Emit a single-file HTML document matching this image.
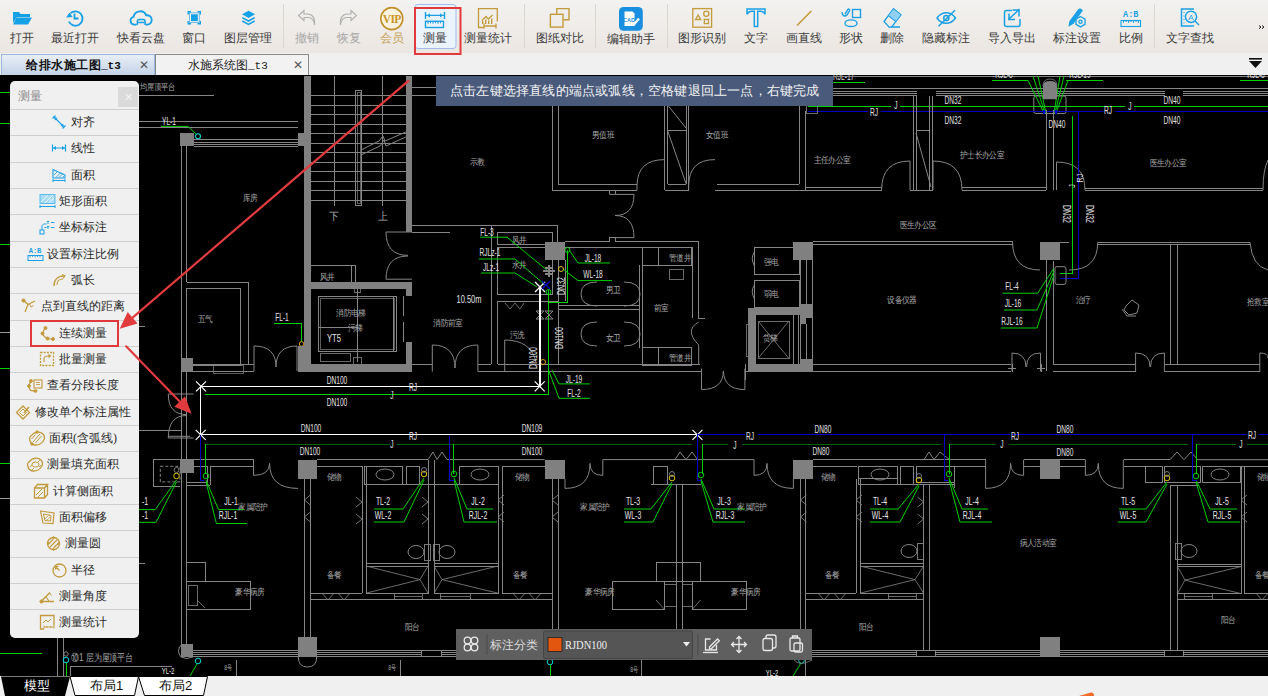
<!DOCTYPE html>
<html><head><meta charset="utf-8">
<style>
*{margin:0;padding:0;box-sizing:border-box}
html,body{width:1268px;height:696px;overflow:hidden;background:#000;font-family:"Liberation Serif",serif}
#cad{position:absolute;left:0;top:0}
#tb{position:absolute;left:0;top:0;width:1268px;height:53px;background:linear-gradient(#f3f2f0,#ebe6e2)}
.lb{position:absolute;top:31px;font-size:12px;line-height:14px;color:#3a3a3a;white-space:nowrap;transform:translateX(-50%)}
.lb.dis{color:#a8a8a8}
.lb.gold{color:#c8a45a}
.sep{position:absolute;top:4px;width:1px;height:44px;background:#dcd6d0}
#tabs{position:absolute;left:0;top:53px;width:1268px;height:22px;background:#f0f0f0}
.tab{position:absolute;top:1px;height:21px;font-size:12px;line-height:20px;white-space:nowrap}
#btabs{position:absolute;left:0;top:676px;width:1268px;height:20px;background:#f0f0f0}
#panel{position:absolute;left:10px;top:81px;width:129px;height:557px;background:#f0f0f0;border-radius:5px;overflow:hidden}
.pi{position:absolute;left:0;width:129px;height:26.4px;padding-right:3px;border-top:1px solid #cfcfcf;font-size:12px;line-height:25px;color:#2a2a2a;white-space:nowrap;text-align:center}
.pi svg{vertical-align:middle;margin-right:3px;position:relative;top:-1px}
#tip{position:absolute;left:436px;top:76px;width:397px;height:29.5px;background:#4a5a7b;color:#f4f4f4;font-size:13px;line-height:29px;padding-left:14px;white-space:nowrap;letter-spacing:0.2px}
#bbar{position:absolute;left:456px;top:629px;width:356px;height:31px;background:#5f5f5f}
</style></head><body>
<svg id="cad" width="1268" height="696" viewBox="0 0 1268 696" shape-rendering="auto"><path d="M139 95.6L213.5 95.6" stroke="#858585" stroke-width="1" shape-rendering="crispEdges"/>
<text transform="translate(140 90) scale(0.8 1)" font-family="Liberation Sans" font-size="9" fill="#a8a8a8" text-anchor="start">均屋顶平台</text>
<path d="M139 121.4L298 121.4" stroke="#858585" stroke-width="1" shape-rendering="crispEdges"/>
<path d="M139 127.5L298 127.5" stroke="#858585" stroke-width="1" shape-rendering="crispEdges"/>
<text transform="translate(169 124.5) scale(0.6 1)" font-family="Liberation Sans" font-size="11.0" fill="#e2e2e2" text-anchor="middle">YL-1</text>
<path d="M161 126.4H188L196 134" stroke="#00d000" stroke-width="1" fill="none"/>
<circle cx="198" cy="136.3" r="2.5" stroke="#00d8d8" stroke-width="1.1" fill="none"/>
<path d="M193.7 139.3L298 139.3" stroke="#858585" stroke-width="1" shape-rendering="crispEdges"/>
<path d="M193.7 142.4L298 142.4" stroke="#858585" stroke-width="1" shape-rendering="crispEdges"/>
<path d="M193.7 144.3L298 144.3" stroke="#858585" stroke-width="1" shape-rendering="crispEdges"/>
<path d="M193.7 146.4L298 146.4" stroke="#858585" stroke-width="1" shape-rendering="crispEdges"/>
<path d="M311 95.6L405.8 95.6" stroke="#858585" stroke-width="1" shape-rendering="crispEdges"/>
<path d="M311 105.2L405.8 105.2" stroke="#858585" stroke-width="1" shape-rendering="crispEdges"/>
<path d="M311 114.7L405.8 114.7" stroke="#858585" stroke-width="1" shape-rendering="crispEdges"/>
<path d="M311 124.3L405.8 124.3" stroke="#858585" stroke-width="1" shape-rendering="crispEdges"/>
<path d="M311 133.6L405.8 133.6" stroke="#858585" stroke-width="1" shape-rendering="crispEdges"/>
<path d="M311 143.2L405.8 143.2" stroke="#858585" stroke-width="1" shape-rendering="crispEdges"/>
<path d="M311 152.8L405.8 152.8" stroke="#858585" stroke-width="1" shape-rendering="crispEdges"/>
<path d="M311 162.1L405.8 162.1" stroke="#858585" stroke-width="1" shape-rendering="crispEdges"/>
<path d="M311 171.5L405.8 171.5" stroke="#858585" stroke-width="1" shape-rendering="crispEdges"/>
<path d="M311 181L405.8 181" stroke="#858585" stroke-width="1" shape-rendering="crispEdges"/>
<path d="M311 190.4L405.8 190.4" stroke="#858585" stroke-width="1" shape-rendering="crispEdges"/>
<path d="M311 200L405.8 200" stroke="#858585" stroke-width="1" shape-rendering="crispEdges"/>
<path d="M334 76L334 206" stroke="#858585" stroke-width="1" shape-rendering="crispEdges"/>
<path d="M382.4 76L382.4 206" stroke="#858585" stroke-width="1" shape-rendering="crispEdges"/>
<rect x="355.4" y="90" width="6.300000000000011" height="115" stroke="#858585" stroke-width="1" fill="none" shape-rendering="crispEdges"/>
<rect x="357" y="92" width="3" height="111" stroke="#858585" stroke-width="0.7" fill="none" shape-rendering="crispEdges"/>
<path d="M361 155L380 146L384 140L386 146L405.8 137M361 150L379 141L383 136L385 141L405.8 132" stroke="#858585" stroke-width="1" fill="none"/>
<path d="M382.4 126L382.4 134" stroke="#858585" stroke-width="1" shape-rendering="crispEdges"/>
<path d="M382.4 158L382.4 166" stroke="#858585" stroke-width="1" shape-rendering="crispEdges"/>
<text transform="translate(334 220) scale(0.9 1)" font-family="Liberation Sans" font-size="11" fill="#a8a8a8" text-anchor="middle">下</text>
<text transform="translate(383 220) scale(0.9 1)" font-family="Liberation Sans" font-size="11" fill="#a8a8a8" text-anchor="middle">上</text>
<text transform="translate(250 201) scale(0.85 1)" font-family="Liberation Sans" font-size="9" fill="#a8a8a8" text-anchor="middle">库房</text>
<path d="M411.9 87.7L436 87.7" stroke="#858585" stroke-width="1" shape-rendering="crispEdges"/>
<path d="M411.9 95.2L436 95.2" stroke="#858585" stroke-width="1" shape-rendering="crispEdges"/>
<path d="M411.9 232L450 232" stroke="#858585" stroke-width="1" shape-rendering="crispEdges"/>
<path d="M181 146L181 358" stroke="#858585" stroke-width="1" shape-rendering="crispEdges"/>
<path d="M186.6 146L186.6 282" stroke="#858585" stroke-width="1" shape-rendering="crispEdges"/>
<path d="M186.6 282H248V365" stroke="#858585" stroke-width="1" fill="none" shape-rendering="crispEdges"/>
<rect x="186.8" y="288" width="53.69999999999999" height="77" stroke="#858585" stroke-width="1" fill="none" shape-rendering="crispEdges"/>
<text transform="translate(205 322) scale(0.85 1)" font-family="Liberation Sans" font-size="9" fill="#a8a8a8" text-anchor="middle">五气</text>
<path d="M193 364.4L254 364.4" stroke="#858585" stroke-width="1" shape-rendering="crispEdges"/>
<path d="M193 371L254 371" stroke="#858585" stroke-width="1" shape-rendering="crispEdges"/>
<path d="M254 346V371M254 346Q276 346 276 367M297 346Q276 346 276 367M297 346V371" stroke="#858585" stroke-width="1" fill="none"/>
<rect x="213" y="365" width="30" height="8" stroke="#858585" stroke-width="0.7" fill="none" shape-rendering="crispEdges"/>
<text transform="translate(282 321) scale(0.6 1)" font-family="Liberation Sans" font-size="11.0" fill="#e2e2e2" text-anchor="middle">FL-1</text>
<path d="M274 323H301.6V342" stroke="#00d000" stroke-width="1" fill="none" shape-rendering="crispEdges"/>
<circle cx="301.6" cy="344" r="2.3" stroke="#e0a000" stroke-width="1" fill="none"/>
<path d="M311 265.4H355.4V281.8M351.6 265.4V281.8" stroke="#858585" stroke-width="1" fill="none" shape-rendering="crispEdges"/>
<text transform="translate(327 280) scale(0.85 1)" font-family="Liberation Sans" font-size="9" fill="#a8a8a8" text-anchor="middle">风井</text>
<rect x="318" y="296.2" width="78.19999999999999" height="55.0" stroke="#858585" stroke-width="1" fill="none" shape-rendering="crispEdges"/>
<rect x="320" y="298" width="74" height="51" stroke="#858585" stroke-width="0.7" fill="none" shape-rendering="crispEdges"/>
<path d="M318 327.3L357 327.3" stroke="#858585" stroke-width="1" shape-rendering="crispEdges"/>
<path d="M357 282L357 362" stroke="#858585" stroke-width="1" shape-rendering="crispEdges"/>
<rect x="354" y="286" width="6" height="6" stroke="#858585" stroke-width="0.8" fill="none" shape-rendering="crispEdges"/>
<rect x="353" y="357" width="8" height="8" stroke="#858585" stroke-width="0.8" fill="none" shape-rendering="crispEdges"/>
<rect x="320" y="353" width="30" height="8" stroke="#858585" stroke-width="0.8" fill="none" shape-rendering="crispEdges"/>
<path d="M393.7 296L393.7 351" stroke="#858585" stroke-width="1" shape-rendering="crispEdges"/>
<path d="M403.8 296L403.8 316" stroke="#858585" stroke-width="1" shape-rendering="crispEdges"/>
<path d="M403.8 322L403.8 342" stroke="#858585" stroke-width="1" shape-rendering="crispEdges"/>
<text transform="translate(351 316) scale(0.85 1)" font-family="Liberation Sans" font-size="9" fill="#a8a8a8" text-anchor="middle">消防电梯</text>
<text transform="translate(355 331) scale(0.85 1)" font-family="Liberation Sans" font-size="9" fill="#a8a8a8" text-anchor="middle">污梯</text>
<text transform="translate(334 342) scale(0.7 1)" font-family="Liberation Sans" font-size="11" fill="#e2e2e2" text-anchor="middle">YT5</text>
<path d="M411.9 232H386Q386 255.4 408 255.4M411.9 279.2H386Q386 256 408 256" stroke="#858585" stroke-width="1" fill="none"/>
<path d="M411.9 225.2L450 225.2" stroke="#858585" stroke-width="1" shape-rendering="crispEdges"/>
<text transform="translate(448 326) scale(0.85 1)" font-family="Liberation Sans" font-size="9" fill="#a8a8a8" text-anchor="middle">消防前室</text>
<path d="M432.3 371.6V345Q455 345 455 368M477.9 371.6V345Q455 345 455 368" stroke="#858585" stroke-width="1" fill="none"/>
<path d="M411.9 364.3L432.3 364.3" stroke="#858585" stroke-width="1" shape-rendering="crispEdges"/>
<path d="M193.6 394H168.3Q168.3 414.6 186.7 414.6M193.6 438H168.3Q168.3 415.5 186.7 415.5M168.3 436.3H190" stroke="#858585" stroke-width="1" fill="none"/>
<path d="M139 326L145 326" stroke="#858585" stroke-width="1" shape-rendering="crispEdges"/>
<path d="M139 563L145 563" stroke="#858585" stroke-width="1" shape-rendering="crispEdges"/>
<path d="M139 430.2L181 430.2" stroke="#858585" stroke-width="1" shape-rendering="crispEdges"/>
<path d="M181 371.5L181 459.9" stroke="#858585" stroke-width="1" shape-rendering="crispEdges"/>
<path d="M186.6 371.5L186.6 459.9" stroke="#858585" stroke-width="1" shape-rendering="crispEdges"/>
<path d="M440 225.5H557.9V241.5" stroke="#858585" stroke-width="1" fill="none" shape-rendering="crispEdges"/>
<path d="M491.4 225.5L491.4 364.3" stroke="#858585" stroke-width="1" shape-rendering="crispEdges"/>
<rect x="497.5" y="232.6" width="54.5" height="11.800000000000011" stroke="#858585" stroke-width="1" fill="none" shape-rendering="crispEdges"/>
<rect x="497.5" y="247.7" width="54.5" height="46.80000000000001" stroke="#858585" stroke-width="1" fill="none" shape-rendering="crispEdges"/>
<path d="M496.8 301.3L558 301.3" stroke="#858585" stroke-width="1" shape-rendering="crispEdges"/>
<text transform="translate(519 243) scale(0.85 1)" font-family="Liberation Sans" font-size="9" fill="#a8a8a8" text-anchor="middle">风井</text>
<text transform="translate(519 268) scale(0.85 1)" font-family="Liberation Sans" font-size="9" fill="#a8a8a8" text-anchor="middle">水井</text>
<text transform="translate(469 303) scale(0.75 1)" font-family="Liberation Sans" font-size="10" fill="#e2e2e2" text-anchor="middle">10.50m</text>
<path d="M477.9 364.3L491.4 364.3" stroke="#858585" stroke-width="1" shape-rendering="crispEdges"/>
<path d="M497.6 364.3L700 364.3" stroke="#858585" stroke-width="1" shape-rendering="crispEdges"/>
<path d="M477.9 371.6L700 371.6" stroke="#858585" stroke-width="1" shape-rendering="crispEdges"/>
<path d="M497.5 301.3L497.5 364.4" stroke="#858585" stroke-width="1" shape-rendering="crispEdges"/>
<path d="M504.7 371.6V340Q531 340 536 362" stroke="#858585" stroke-width="1" fill="none"/>
<path d="M505 303L510 309L515 303L520 309L524 303" stroke="#858585" stroke-width="0.8" fill="none"/>
<text transform="translate(517 338) scale(0.85 1)" font-family="Liberation Sans" font-size="9" fill="#a8a8a8" text-anchor="middle">污洗</text>
<path d="M565 241.5H609.5V237.6H615.5V241.5H698.7V318.5H705M565 247.8H692V318" stroke="#858585" stroke-width="1" fill="none" shape-rendering="crispEdges"/>
<rect x="642" y="247.8" width="49" height="17.599999999999966" stroke="#858585" stroke-width="1" fill="none" shape-rendering="crispEdges"/>
<path d="M658.4 247.8L658.4 265.4" stroke="#858585" stroke-width="1" shape-rendering="crispEdges"/>
<rect x="642" y="347.5" width="49" height="17.69999999999999" stroke="#858585" stroke-width="1" fill="none" shape-rendering="crispEdges"/>
<path d="M658.4 347.5L658.4 365.2" stroke="#858585" stroke-width="1" shape-rendering="crispEdges"/>
<path d="M639.5 265.4L639.5 347.5" stroke="#858585" stroke-width="1" shape-rendering="crispEdges"/>
<path d="M642 265.4L642 347.5" stroke="#858585" stroke-width="1" shape-rendering="crispEdges"/>
<text transform="translate(680 261) scale(0.85 1)" font-family="Liberation Sans" font-size="9" fill="#a8a8a8" text-anchor="middle">管道井</text>
<text transform="translate(680 361) scale(0.85 1)" font-family="Liberation Sans" font-size="9" fill="#a8a8a8" text-anchor="middle">管道井</text>
<rect x="669" y="269" width="14" height="10" stroke="#858585" stroke-width="0.8" fill="none" shape-rendering="crispEdges"/>
<text transform="translate(661 311) scale(0.85 1)" font-family="Liberation Sans" font-size="9" fill="#a8a8a8" text-anchor="middle">前室</text>
<text transform="translate(613 293) scale(0.85 1)" font-family="Liberation Sans" font-size="9" fill="#a8a8a8" text-anchor="middle">男卫</text>
<text transform="translate(613 341) scale(0.85 1)" font-family="Liberation Sans" font-size="9" fill="#a8a8a8" text-anchor="middle">女卫</text>
<path d="M558 305.8L639.5 305.8" stroke="#858585" stroke-width="1" shape-rendering="crispEdges"/>
<path d="M558 309.6L639.5 309.6" stroke="#858585" stroke-width="1" shape-rendering="crispEdges"/>
<path d="M558 260.4L558 365" stroke="#858585" stroke-width="1" shape-rendering="crispEdges"/>
<path d="M565 260.4L565 301.3" stroke="#858585" stroke-width="1" shape-rendering="crispEdges"/>
<path d="M597 282Q581 282 581 294Q581 306 597 306" stroke="#858585" stroke-width="1" fill="none"/>
<path d="M597 322Q581 322 581 334Q581 346 597 346" stroke="#858585" stroke-width="1" fill="none"/>
<path d="M624 282Q640 282 640 294Q640 306 624 306" stroke="#858585" stroke-width="1" fill="none"/>
<path d="M624 322Q640 322 640 334Q640 346 624 346" stroke="#858585" stroke-width="1" fill="none"/>
<path d="M698.7 322Q684 330 698.7 345V365" stroke="#858585" stroke-width="1" fill="none"/>
<text transform="translate(487 236) scale(0.6 1)" font-family="Liberation Sans" font-size="11.0" fill="#e2e2e2" text-anchor="middle">FL-3</text>
<path d="M480 237.2H507L548 271" stroke="#00d000" stroke-width="1" fill="none"/>
<text transform="translate(490 256) scale(0.6 1)" font-family="Liberation Sans" font-size="11.0" fill="#e2e2e2" text-anchor="middle">RJLz-1</text>
<path d="M479 259H515L545 285" stroke="#00d000" stroke-width="1" fill="none"/>
<text transform="translate(491 271) scale(0.6 1)" font-family="Liberation Sans" font-size="11.0" fill="#e2e2e2" text-anchor="middle">JLz-1</text>
<path d="M481 273H515L537 287" stroke="#00d000" stroke-width="1" fill="none"/>
<path d="M543 271H555M549 265V277M545 268H553M545 274H553" stroke="#858585" stroke-width="1.2" fill="none" shape-rendering="crispEdges"/>
<path d="M535 282L545 292M535 292L545 282" stroke="#fff" stroke-width="1.3" fill="none"/>
<path d="M542 281L550 289M542 289L550 281" stroke="#0000c8" stroke-width="1.3" fill="none"/>
<text transform="translate(593 262) scale(0.6 1)" font-family="Liberation Sans" font-size="11.0" fill="#e2e2e2" text-anchor="middle">JL-18</text>
<path d="M569 250L578 263H610" stroke="#00d000" stroke-width="1" fill="none"/>
<text transform="translate(593 278) scale(0.6 1)" font-family="Liberation Sans" font-size="11.0" fill="#e2e2e2" text-anchor="middle">WL-18</text>
<path d="M563 269L578 280.6H612" stroke="#00d000" stroke-width="1" fill="none"/>
<path d="M567.5 250V302.8H548.5M548.5 290V394.5H205" stroke="#00d000" stroke-width="1" fill="none" shape-rendering="crispEdges"/>
<circle cx="567.5" cy="250" r="2.5" stroke="#00d000" stroke-width="1" fill="none"/>
<circle cx="548.5" cy="292" r="2.5" stroke="#00d000" stroke-width="1" fill="none"/>
<circle cx="561" cy="269" r="2.5" stroke="#e0c000" stroke-width="1" fill="none"/>
<path d="M536 311L544 319M536 319L544 311M536 311H544M536 319H544M545 311L553 319M545 319L553 311M545 311H553M545 319H553" stroke="#858585" stroke-width="1" fill="none"/>
<text transform="translate(565 286) rotate(-90) scale(0.7 1)" font-family="Liberation Sans" font-size="10" fill="#e2e2e2" text-anchor="middle">DN32</text>
<text transform="translate(563 338) rotate(-90) scale(0.7 1)" font-family="Liberation Sans" font-size="10" fill="#e2e2e2" text-anchor="middle">DN100</text>
<text transform="translate(537 358) rotate(-90) scale(0.7 1)" font-family="Liberation Sans" font-size="10" fill="#e2e2e2" text-anchor="middle">DN100</text>
<circle cx="543" cy="362" r="2.5" stroke="#e0a000" stroke-width="1" fill="none"/>
<path d="M552 106L552 190" stroke="#858585" stroke-width="1" shape-rendering="crispEdges"/>
<path d="M558 106L558 184.4" stroke="#858585" stroke-width="1" shape-rendering="crispEdges"/>
<path d="M552 190L637 190" stroke="#858585" stroke-width="1" shape-rendering="crispEdges"/>
<path d="M558 184.4L637 184.4" stroke="#858585" stroke-width="1" shape-rendering="crispEdges"/>
<path d="M637 190V186Q637 159.6 664.6 159.6" stroke="#858585" stroke-width="1" fill="none"/>
<path d="M664.6 96L664.6 190" stroke="#858585" stroke-width="1" shape-rendering="crispEdges"/>
<path d="M667.6 96L667.6 184.4" stroke="#858585" stroke-width="1" shape-rendering="crispEdges"/>
<path d="M686 96L686 184.4" stroke="#858585" stroke-width="1" shape-rendering="crispEdges"/>
<path d="M688.7 96L688.7 190" stroke="#858585" stroke-width="1" shape-rendering="crispEdges"/>
<path d="M667.6 130.6L686 130.6" stroke="#858585" stroke-width="1" shape-rendering="crispEdges"/>
<path d="M667.6 105L686 128" stroke="#858585" stroke-width="1"/>
<path d="M667.6 130.6L686 183.6" stroke="#858585" stroke-width="1"/>
<path d="M667.6 184.4L686 184.4" stroke="#858585" stroke-width="1" shape-rendering="crispEdges"/>
<path d="M664.6 190L688.7 190" stroke="#858585" stroke-width="1" shape-rendering="crispEdges"/>
<path d="M688.7 190V186Q688.7 159.6 715 159.6" stroke="#858585" stroke-width="1" fill="none"/>
<path d="M717 184.4L760 184.4" stroke="#858585" stroke-width="1" shape-rendering="crispEdges"/>
<path d="M715 190L760 190" stroke="#858585" stroke-width="1" shape-rendering="crispEdges"/>
<text transform="translate(477 165) scale(0.85 1)" font-family="Liberation Sans" font-size="9" fill="#a8a8a8" text-anchor="middle">示教</text>
<text transform="translate(603 138) scale(0.85 1)" font-family="Liberation Sans" font-size="9" fill="#a8a8a8" text-anchor="middle">男值班</text>
<text transform="translate(717 138) scale(0.85 1)" font-family="Liberation Sans" font-size="9" fill="#a8a8a8" text-anchor="middle">女值班</text>
<path d="M609.5 190V194.4H615.5V190M615.5 194.4H634Q634 215.5 615 215.5Q634 215.5 634 237.6H615.5" stroke="#858585" stroke-width="1" fill="none"/>
<text transform="translate(440 0) scale(0.6 1)" font-family="Liberation Sans" font-size="1.1" fill="#e2e2e2" text-anchor="middle"></text>
<path d="M833 88.5L1042.5 88.5" stroke="#858585" stroke-width="1" shape-rendering="crispEdges"/>
<path d="M1054 88.5L1268 88.5" stroke="#858585" stroke-width="1" shape-rendering="crispEdges"/>
<path d="M833 91.5L1042.5 91.5" stroke="#858585" stroke-width="1" shape-rendering="crispEdges"/>
<path d="M1054 91.5L1268 91.5" stroke="#858585" stroke-width="1" shape-rendering="crispEdges"/>
<path d="M833 93.5L1042.5 93.5" stroke="#858585" stroke-width="1" shape-rendering="crispEdges"/>
<path d="M1054 93.5L1268 93.5" stroke="#858585" stroke-width="1" shape-rendering="crispEdges"/>
<path d="M833 95.6L1042.5 95.6" stroke="#858585" stroke-width="1" shape-rendering="crispEdges"/>
<path d="M1054 95.6L1268 95.6" stroke="#858585" stroke-width="1" shape-rendering="crispEdges"/>
<rect x="916.6" y="88" width="18.899999999999977" height="9" fill="#000" shape-rendering="crispEdges"/>
<path d="M916.6 88L935.5 88" stroke="#858585" stroke-width="1" shape-rendering="crispEdges"/>
<rect x="1165" y="88" width="18" height="9" fill="#000" shape-rendering="crispEdges"/>
<path d="M1165 88L1183 88" stroke="#858585" stroke-width="1" shape-rendering="crispEdges"/>
<path d="M1043 86Q1043 79 1050 79Q1057 79 1057 86" stroke="#858585" stroke-width="0.8" fill="none"/>
<rect x="1033.8" y="96" width="32.2" height="17.5" rx="2" stroke="#858585" fill="none"/>
<path d="M1047.5 99.2L1053.5 99.2" stroke="#000" stroke-width="1" shape-rendering="crispEdges"/>
<path d="M833 82.4L865 82.4" stroke="#00d000" stroke-width="1" shape-rendering="crispEdges"/>
<text transform="translate(833 80) scale(0.6 1)" font-family="Liberation Sans" font-size="11.0" fill="#e2e2e2" text-anchor="start">RJL-17</text>
<path d="M833 76.3L1268 76.3" stroke="#858585" stroke-width="1" shape-rendering="crispEdges"/>
<path d="M992 80.6L1027.6 80.6" stroke="#00d000" stroke-width="1" shape-rendering="crispEdges"/>
<path d="M1065.5 80.3L1103.4 80.3" stroke="#00d000" stroke-width="1" shape-rendering="crispEdges"/>
<path d="M1240 80L1268 80" stroke="#00d000" stroke-width="1" shape-rendering="crispEdges"/>
<text transform="translate(1004 78) scale(0.6 1)" font-family="Liberation Sans" font-size="11.0" fill="#e2e2e2" text-anchor="middle">RJL-8</text>
<text transform="translate(1080 78) scale(0.6 1)" font-family="Liberation Sans" font-size="11.0" fill="#e2e2e2" text-anchor="middle">RJL-19</text>
<text transform="translate(1256 78) scale(0.6 1)" font-family="Liberation Sans" font-size="11.0" fill="#e2e2e2" text-anchor="middle">RJL-8</text>
<path d="M1028 80.5L1044 113M1033 76L1045 113M1038 76L1046 113M1068 80.5L1056 113M1064 76L1055 113M1060 76L1054 113" stroke="#00d000" stroke-width="1" fill="none"/>
<path d="M1044 110L1044 114" stroke="#0000c8" stroke-width="1.5" shape-rendering="crispEdges"/>
<path d="M1056 110L1056 114" stroke="#0000c8" stroke-width="1.5" shape-rendering="crispEdges"/>
<path d="M808 106.3H891M900 106.3H1125M1134 106.3H1268" stroke="#00d000" stroke-width="1" fill="none" shape-rendering="crispEdges"/>
<path d="M808 111.8H868M881 111.8H1103M1115 111.8H1268" stroke="#0000c8" stroke-width="1" fill="none" shape-rendering="crispEdges"/>
<text transform="translate(896 109) scale(0.6 1)" font-family="Liberation Sans" font-size="11.0" fill="#e2e2e2" text-anchor="middle">J</text>
<text transform="translate(874 116) scale(0.6 1)" font-family="Liberation Sans" font-size="11.0" fill="#e2e2e2" text-anchor="middle">RJ</text>
<text transform="translate(1130 110) scale(0.6 1)" font-family="Liberation Sans" font-size="11.0" fill="#e2e2e2" text-anchor="middle">J</text>
<text transform="translate(1108 114) scale(0.6 1)" font-family="Liberation Sans" font-size="11.0" fill="#e2e2e2" text-anchor="middle">RJ</text>
<rect x="806" y="103" width="11" height="10" stroke="#858585" stroke-width="0.8" fill="none" shape-rendering="crispEdges"/>
<text transform="translate(953 104) scale(0.6 1)" font-family="Liberation Sans" font-size="11.0" fill="#e2e2e2" text-anchor="middle">DN32</text>
<text transform="translate(953 124) scale(0.6 1)" font-family="Liberation Sans" font-size="11.0" fill="#e2e2e2" text-anchor="middle">DN32</text>
<text transform="translate(1057 128) scale(0.6 1)" font-family="Liberation Sans" font-size="11.0" fill="#e2e2e2" text-anchor="middle">DN40</text>
<text transform="translate(1172 104) scale(0.6 1)" font-family="Liberation Sans" font-size="11.0" fill="#e2e2e2" text-anchor="middle">DN40</text>
<text transform="translate(1172 124) scale(0.6 1)" font-family="Liberation Sans" font-size="11.0" fill="#e2e2e2" text-anchor="middle">DN40</text>
<path d="M805.5 111L805.5 190" stroke="#858585" stroke-width="1" shape-rendering="crispEdges"/>
<path d="M799 106L799 184.3" stroke="#858585" stroke-width="1" shape-rendering="crispEdges"/>
<path d="M750 184.3L799 184.3" stroke="#858585" stroke-width="1" shape-rendering="crispEdges"/>
<path d="M717 190L805.5 190" stroke="#858585" stroke-width="1" shape-rendering="crispEdges"/>
<path d="M805.5 187.5L881.6 187.5" stroke="#858585" stroke-width="1" shape-rendering="crispEdges"/>
<path d="M805.5 190L881.6 190" stroke="#858585" stroke-width="1" shape-rendering="crispEdges"/>
<path d="M881.6 190Q881.6 161 910 161V190" stroke="#858585" stroke-width="1" fill="none"/>
<path d="M913.5 96L913.5 190" stroke="#858585" stroke-width="1" shape-rendering="crispEdges"/>
<path d="M916 96L916 190" stroke="#858585" stroke-width="1" shape-rendering="crispEdges"/>
<path d="M929.5 96L929.5 190" stroke="#858585" stroke-width="1" shape-rendering="crispEdges"/>
<path d="M932 96L932 190" stroke="#858585" stroke-width="1" shape-rendering="crispEdges"/>
<path d="M916 130.6L929.5 130.6" stroke="#858585" stroke-width="1" shape-rendering="crispEdges"/>
<path d="M916 133L931 187" stroke="#858585" stroke-width="1"/>
<path d="M910 190L933 190" stroke="#858585" stroke-width="1" shape-rendering="crispEdges"/>
<path d="M933 190V161Q962 161 962 190" stroke="#858585" stroke-width="1" fill="none"/>
<path d="M962 187.5L1046 187.5" stroke="#858585" stroke-width="1" shape-rendering="crispEdges"/>
<path d="M962 190L1046 190" stroke="#858585" stroke-width="1" shape-rendering="crispEdges"/>
<path d="M1046 110L1046 190" stroke="#858585" stroke-width="1" shape-rendering="crispEdges"/>
<path d="M1053 110L1053 190" stroke="#858585" stroke-width="1" shape-rendering="crispEdges"/>
<path d="M1056.5 190V162Q1085 162 1085 190" stroke="#858585" stroke-width="1" fill="none"/>
<path d="M1085 188.4L1263 188.4" stroke="#858585" stroke-width="1" shape-rendering="crispEdges"/>
<path d="M1085 190.5L1263 190.5" stroke="#858585" stroke-width="1" shape-rendering="crispEdges"/>
<path d="M1268 160Q1263 170 1263 190" stroke="#858585" stroke-width="1" fill="none"/>
<path d="M1072.4 116V273.3H1060" stroke="#00d000" stroke-width="1" fill="none" shape-rendering="crispEdges"/>
<path d="M1078.6 111.8V278.6H1060" stroke="#0000c8" stroke-width="1" fill="none" shape-rendering="crispEdges"/>
<text transform="translate(1075 186) rotate(-90) scale(0.8 1)" font-family="Liberation Sans" font-size="9" fill="#e2e2e2" text-anchor="middle">J</text>
<text transform="translate(1083 178) rotate(-90) scale(0.8 1)" font-family="Liberation Sans" font-size="9" fill="#e2e2e2" text-anchor="middle">RJ</text>
<text transform="translate(1063 214) rotate(90) scale(0.7 1)" font-family="Liberation Sans" font-size="10" fill="#e2e2e2" text-anchor="middle">DN32</text>
<text transform="translate(1086 214) rotate(90) scale(0.7 1)" font-family="Liberation Sans" font-size="10" fill="#e2e2e2" text-anchor="middle">DN32</text>
<text transform="translate(832 163) scale(0.85 1)" font-family="Liberation Sans" font-size="9" fill="#a8a8a8" text-anchor="middle">主任办公室</text>
<text transform="translate(982 158) scale(0.85 1)" font-family="Liberation Sans" font-size="9" fill="#a8a8a8" text-anchor="middle">护士长办公室</text>
<text transform="translate(918 228) scale(0.85 1)" font-family="Liberation Sans" font-size="9" fill="#a8a8a8" text-anchor="middle">医生办公区</text>
<text transform="translate(1168 166) scale(0.85 1)" font-family="Liberation Sans" font-size="9" fill="#a8a8a8" text-anchor="middle">医生办公室</text>
<path d="M812.6 241.5L1012.5 241.5" stroke="#858585" stroke-width="1" shape-rendering="crispEdges"/>
<path d="M812.6 244.5L1012.5 244.5" stroke="#858585" stroke-width="1" shape-rendering="crispEdges"/>
<path d="M1012.5 241.5Q1012.5 270 1040 270" stroke="#858585" stroke-width="1" fill="none"/>
<rect x="754.5" y="247.8" width="44.700000000000045" height="26.5" stroke="#858585" stroke-width="1" fill="none" shape-rendering="crispEdges"/>
<rect x="754.5" y="280.6" width="44.700000000000045" height="26.399999999999977" stroke="#858585" stroke-width="1" fill="none" shape-rendering="crispEdges"/>
<path d="M754.5 252Q750 258 754.5 266M754.5 285Q750 291 754.5 299" stroke="#858585" stroke-width="1" fill="none"/>
<text transform="translate(771 265) scale(0.85 1)" font-family="Liberation Sans" font-size="9" fill="#a8a8a8" text-anchor="middle">强电</text>
<text transform="translate(771 297) scale(0.85 1)" font-family="Liberation Sans" font-size="9" fill="#a8a8a8" text-anchor="middle">弱电</text>
<rect x="755.5" y="314.6" width="37.5" height="49.799999999999955" stroke="#858585" stroke-width="1" fill="none" shape-rendering="crispEdges"/>
<rect x="758" y="321" width="31" height="37.5" stroke="#858585" stroke-width="0.8" fill="none" shape-rendering="crispEdges"/>
<path d="M758 321L789 358.5" stroke="#858585" stroke-width="0.8"/>
<path d="M789 321L758 358.5" stroke="#858585" stroke-width="0.8"/>
<text transform="translate(770 341) scale(0.85 1)" font-family="Liberation Sans" font-size="9" fill="#a8a8a8" text-anchor="middle">货梯</text>
<path d="M798.8 314.6L798.8 364.4" stroke="#858585" stroke-width="1" shape-rendering="crispEdges"/>
<path d="M800 324.3L800 359.2" stroke="#858585" stroke-width="1" shape-rendering="crispEdges"/>
<path d="M806 324.3L806 359.2" stroke="#858585" stroke-width="1" shape-rendering="crispEdges"/>
<path d="M800 260.4L800 304.2" stroke="#858585" stroke-width="1" shape-rendering="crispEdges"/>
<path d="M806 260.4L806 304.2" stroke="#858585" stroke-width="1" shape-rendering="crispEdges"/>
<rect x="746" y="324" width="4" height="32" stroke="#858585" stroke-width="0.8" fill="none" shape-rendering="crispEdges"/>
<path d="M745 364L745 380" stroke="#858585" stroke-width="1" shape-rendering="crispEdges"/>
<path d="M812.6 364.4L1011 364.4" stroke="#858585" stroke-width="1" shape-rendering="crispEdges"/>
<path d="M812.6 371.5L1011 371.5" stroke="#858585" stroke-width="1" shape-rendering="crispEdges"/>
<path d="M812.6 244.5L812.6 364.4" stroke="#858585" stroke-width="1" shape-rendering="crispEdges"/>
<text transform="translate(902 303) scale(0.85 1)" font-family="Liberation Sans" font-size="9" fill="#a8a8a8" text-anchor="middle">设备仪器</text>
<path d="M1046.7 260.4L1046.7 371" stroke="#858585" stroke-width="1" shape-rendering="crispEdges"/>
<path d="M1053 261L1053 365" stroke="#858585" stroke-width="1" shape-rendering="crispEdges"/>
<path d="M1002.5 293.2H1037.7L1054 268M1004 310H1037L1054 271M1001 328H1037L1054 275" stroke="#00d000" stroke-width="1" fill="none"/>
<text transform="translate(1012 290) scale(0.6 1)" font-family="Liberation Sans" font-size="11.0" fill="#e2e2e2" text-anchor="middle">FL-4</text>
<text transform="translate(1013 307) scale(0.6 1)" font-family="Liberation Sans" font-size="11.0" fill="#e2e2e2" text-anchor="middle">JL-16</text>
<text transform="translate(1012 325) scale(0.6 1)" font-family="Liberation Sans" font-size="11.0" fill="#e2e2e2" text-anchor="middle">RJL-16</text>
<rect x="1055" y="266.7" width="11" height="17.7" rx="2" stroke="#858585" fill="none"/>
<path d="M1012 371.5V353Q1026 353 1026 367M1040.5 371.5V353Q1026.5 353 1026.5 367" stroke="#858585" stroke-width="1" fill="none"/>
<path d="M1008 368H1016M1012 364V372M1037 368H1045M1041 364V372" stroke="#858585" stroke-width="1" fill="none" shape-rendering="crispEdges"/>
<path d="M1060 242.3L1069 242.3" stroke="#858585" stroke-width="1" shape-rendering="crispEdges"/>
<path d="M1097.7 242.3Q1097.7 270 1069 270" stroke="#858585" stroke-width="1" fill="none"/>
<path d="M1097.7 242.3L1250 242.3" stroke="#858585" stroke-width="1" shape-rendering="crispEdges"/>
<path d="M1097.7 244.8L1250 244.8" stroke="#858585" stroke-width="1" shape-rendering="crispEdges"/>
<path d="M1250 242.3Q1252 266 1268 270" stroke="#858585" stroke-width="1" fill="none"/>
<path d="M1170 244.8L1170 364.8" stroke="#858585" stroke-width="1" shape-rendering="crispEdges"/>
<path d="M1177.5 244.8L1177.5 364.8" stroke="#858585" stroke-width="1" shape-rendering="crispEdges"/>
<path d="M1053 364.8L1135.6 364.8" stroke="#858585" stroke-width="1" shape-rendering="crispEdges"/>
<path d="M1053 371.7L1135.6 371.7" stroke="#858585" stroke-width="1" shape-rendering="crispEdges"/>
<path d="M1164.4 364.8L1259.8 364.8" stroke="#858585" stroke-width="1" shape-rendering="crispEdges"/>
<path d="M1164.4 371.7L1259.8 371.7" stroke="#858585" stroke-width="1" shape-rendering="crispEdges"/>
<path d="M1135.6 371.7V353Q1150 353 1150 367M1164.4 371.7V353Q1150.5 353 1150.5 367" stroke="#858585" stroke-width="1" fill="none"/>
<text transform="translate(1083 303) scale(0.85 1)" font-family="Liberation Sans" font-size="9" fill="#a8a8a8" text-anchor="middle">治疗</text>
<text transform="translate(1258 305) scale(0.85 1)" font-family="Liberation Sans" font-size="9" fill="#a8a8a8" text-anchor="middle">抢救室</text>
<path d="M1126 306L1132 300L1139 305L1137 313L1129 315L1124 310Z" stroke="#858585" stroke-width="1" fill="none"/>
<path d="M1122 309L1127 316L1136 316" stroke="#858585" stroke-width="1" fill="none"/>
<path d="M201 386.4H539.7V287" stroke="#ffffff" stroke-width="1.6" fill="none" shape-rendering="crispEdges"/>
<path d="M200.7 386.4V434.9H697.4" stroke="#ffffff" stroke-width="1" fill="none" shape-rendering="crispEdges"/>
<path d="M196 381.4L206 391.4M196 391.4L206 381.4" stroke="#fff" stroke-width="1.2" fill="none"/>
<path d="M534.7 381.4L544.7 391.4M534.7 391.4L544.7 381.4" stroke="#fff" stroke-width="1.2" fill="none"/>
<path d="M195.7 429.9L205.7 439.9M195.7 439.9L205.7 429.9" stroke="#fff" stroke-width="1.2" fill="none"/>
<path d="M692.4 429.9L702.4 439.9M692.4 439.9L702.4 429.9" stroke="#fff" stroke-width="1.2" fill="none"/>
<path d="M697.4 434.9H745M758 434.9H1010M1024 434.9H1012M1024 434.9H1247M1259 434.9H1268" stroke="#0000c8" stroke-width="1" fill="none" shape-rendering="crispEdges"/>
<path d="M205.3 444.3H390M397 444.3H692.4M702.5 444.3H728M742 444.3H940.6M949.5 444.3H996M1009 444.3H1188M1196.6 444.3H1236M1247 444.3H1268" stroke="#006400" stroke-width="1" fill="none" shape-rendering="crispEdges"/>
<path d="M397 394.5L548.5 394.5" stroke="#00d000" stroke-width="1" shape-rendering="crispEdges"/>
<text transform="translate(392 399) scale(0.6 1)" font-family="Liberation Sans" font-size="11.0" fill="#e2e2e2" text-anchor="middle">J</text>
<text transform="translate(392 448) scale(0.6 1)" font-family="Liberation Sans" font-size="11.0" fill="#e2e2e2" text-anchor="middle">J</text>
<text transform="translate(1002 448) scale(0.6 1)" font-family="Liberation Sans" font-size="11.0" fill="#e2e2e2" text-anchor="middle">J</text>
<text transform="translate(1241 448) scale(0.6 1)" font-family="Liberation Sans" font-size="11.0" fill="#e2e2e2" text-anchor="middle">J</text>
<text transform="translate(413 391) scale(0.6 1)" font-family="Liberation Sans" font-size="11.0" fill="#e2e2e2" text-anchor="middle">RJ</text>
<text transform="translate(413 440) scale(0.6 1)" font-family="Liberation Sans" font-size="11.0" fill="#e2e2e2" text-anchor="middle">RJ</text>
<text transform="translate(750 440) scale(0.6 1)" font-family="Liberation Sans" font-size="11.0" fill="#e2e2e2" text-anchor="middle">RJ</text>
<text transform="translate(1015 440) scale(0.6 1)" font-family="Liberation Sans" font-size="11.0" fill="#e2e2e2" text-anchor="middle">RJ</text>
<text transform="translate(1252 439) scale(0.6 1)" font-family="Liberation Sans" font-size="11.0" fill="#e2e2e2" text-anchor="middle">RJ</text>
<text transform="translate(337 384) scale(0.6 1)" font-family="Liberation Sans" font-size="11.0" fill="#e2e2e2" text-anchor="middle">DN100</text>
<text transform="translate(337 406) scale(0.6 1)" font-family="Liberation Sans" font-size="11.0" fill="#e2e2e2" text-anchor="middle">DN100</text>
<text transform="translate(311 432) scale(0.6 1)" font-family="Liberation Sans" font-size="11.0" fill="#e2e2e2" text-anchor="middle">DN100</text>
<text transform="translate(310 455) scale(0.6 1)" font-family="Liberation Sans" font-size="11.0" fill="#e2e2e2" text-anchor="middle">DN100</text>
<text transform="translate(823 433) scale(0.6 1)" font-family="Liberation Sans" font-size="11.0" fill="#e2e2e2" text-anchor="middle">DN80</text>
<text transform="translate(821 455) scale(0.6 1)" font-family="Liberation Sans" font-size="11.0" fill="#e2e2e2" text-anchor="middle">DN80</text>
<text transform="translate(1065 433) scale(0.6 1)" font-family="Liberation Sans" font-size="11.0" fill="#e2e2e2" text-anchor="middle">DN80</text>
<text transform="translate(1065 456) scale(0.6 1)" font-family="Liberation Sans" font-size="11.0" fill="#e2e2e2" text-anchor="middle">DN80</text>
<text transform="translate(532 432) scale(0.6 1)" font-family="Liberation Sans" font-size="11.0" fill="#e2e2e2" text-anchor="middle">DN109</text>
<text transform="translate(532 455) scale(0.6 1)" font-family="Liberation Sans" font-size="11.0" fill="#e2e2e2" text-anchor="middle">DN100</text>
<path d="M548.5 370L559 398.3H590M552 370L559 383.9H590" stroke="#00d000" stroke-width="1" fill="none"/>
<text transform="translate(574 383) scale(0.6 1)" font-family="Liberation Sans" font-size="11.0" fill="#e2e2e2" text-anchor="middle">JL-19</text>
<text transform="translate(574 397) scale(0.6 1)" font-family="Liberation Sans" font-size="11.0" fill="#e2e2e2" text-anchor="middle">FL-2</text>
<path d="M1259.8 371.7V353Q1268 353 1268 358" stroke="#858585" stroke-width="1" fill="none"/>
<path d="M153.2 459.9H253.3V475.4M153.2 459.9V486.8H180.2" stroke="#858585" stroke-width="1" fill="none" shape-rendering="crispEdges"/>
<rect x="160.3" y="466.3" width="19.7" height="15.6" stroke="#858585" stroke-dasharray="3 2" fill="none"/>
<path d="M193.7 466.3H207.9V485.4M210 485.4V466.3H253.3M186.6 482.3H207.9M186.6 485.4H210" stroke="#858585" stroke-width="1" fill="none" shape-rendering="crispEdges"/>
<path d="M253.3 475.4Q269.6 475.4 269.6 463.4Q269.6 488.4 298 488.4" stroke="#858585" stroke-width="1" fill="none"/>
<path d="M317.2 459.6L428 459.6" stroke="#858585" stroke-width="1" shape-rendering="crispEdges"/>
<path d="M317.2 466.4L361.8 466.4" stroke="#858585" stroke-width="1" shape-rendering="crispEdges"/>
<path d="M428 459.6L433 452L437 459.6L442 452L447 459.6H544.7" stroke="#858585" stroke-width="1" fill="none"/>
<rect x="364.8" y="466.4" width="37.19999999999999" height="18.5" stroke="#858585" stroke-width="1" fill="none" shape-rendering="crispEdges"/>
<rect x="406.5" y="466.4" width="12.5" height="18.5" stroke="#858585" stroke-width="1" fill="none" shape-rendering="crispEdges"/>
<ellipse cx="385" cy="474.5" rx="9" ry="5.5" stroke="#858585" fill="none"/>
<rect x="459" y="466.4" width="39" height="18.5" stroke="#858585" stroke-width="1" fill="none" shape-rendering="crispEdges"/>
<ellipse cx="480" cy="474.5" rx="9" ry="5.5" stroke="#858585" fill="none"/>
<path d="M402 484.9L459 484.9" stroke="#858585" stroke-width="1" shape-rendering="crispEdges"/>
<path d="M502 466.4L544.7 466.4" stroke="#858585" stroke-width="1" shape-rendering="crispEdges"/>
<path d="M565 479V488.4Q590 488.4 590 463.4Q590 475.4 602.8 475.4V459.6H754" stroke="#858585" stroke-width="1" fill="none"/>
<path d="M675 459.6L680 452L686 459.6L692 452L697.5 459.6" stroke="#858585" stroke-width="1" fill="none"/>
<rect x="653" y="466.4" width="14" height="18.5" stroke="#858585" stroke-width="1" fill="none" shape-rendering="crispEdges"/>
<path d="M650.7 484.9L701 484.9" stroke="#858585" stroke-width="1" shape-rendering="crispEdges"/>
<path d="M754 459.6V475.4Q767 475.4 767 463.4Q767 488.4 793.4 488.4V479" stroke="#858585" stroke-width="1" fill="none"/>
<path d="M812.6 459.6L986 459.6" stroke="#858585" stroke-width="1" shape-rendering="crispEdges"/>
<path d="M812.6 466.4L857.3 466.4" stroke="#858585" stroke-width="1" shape-rendering="crispEdges"/>
<path d="M924 459.6L929 452L934 459.6L940 452L949.5 459.6" stroke="#858585" stroke-width="1" fill="none"/>
<rect x="858.6" y="466.4" width="39.0" height="18.5" stroke="#858585" stroke-width="1" fill="none" shape-rendering="crispEdges"/>
<path d="M858.6 478L897.6 478" stroke="#858585" stroke-width="1" shape-rendering="crispEdges"/>
<rect x="900" y="466.4" width="13" height="18.5" stroke="#858585" stroke-width="1" fill="none" shape-rendering="crispEdges"/>
<rect x="916.7" y="466.4" width="37.799999999999955" height="16.0" stroke="#858585" stroke-width="1" fill="none" shape-rendering="crispEdges"/>
<path d="M954.5 466.4L986 466.4" stroke="#858585" stroke-width="1" shape-rendering="crispEdges"/>
<path d="M954.5 466.4L954.5 488" stroke="#858585" stroke-width="1" shape-rendering="crispEdges"/>
<ellipse cx="880" cy="474.5" rx="9" ry="5.5" stroke="#858585" fill="none"/>
<path d="M897.6 484.9L954.5 484.9" stroke="#858585" stroke-width="1" shape-rendering="crispEdges"/>
<path d="M985.6 459.7V488.4Q1010.6 488.4 1010.6 463.4Q1010.6 475.4 1023.6 475.4V459.7" stroke="#858585" stroke-width="1" fill="none"/>
<path d="M1023.6 459.9L1085.4 459.9" stroke="#858585" stroke-width="1" shape-rendering="crispEdges"/>
<path d="M1023.6 466.3L1085.4 466.3" stroke="#858585" stroke-width="1" shape-rendering="crispEdges"/>
<path d="M1085.4 459.7V475.4Q1098.3 475.4 1098.3 463.4Q1098.3 488.4 1123.3 488.4V459.7" stroke="#858585" stroke-width="1" fill="none"/>
<path d="M1123.7 459.7L1170 459.7" stroke="#858585" stroke-width="1" shape-rendering="crispEdges"/>
<path d="M1123.7 466.5L1145.3 466.5" stroke="#858585" stroke-width="1" shape-rendering="crispEdges"/>
<path d="M1170 459.7L1177 452L1184 459.7L1191 452L1197.7 459.7H1268" stroke="#858585" stroke-width="1" fill="none"/>
<rect x="1145.3" y="466.5" width="16.700000000000045" height="16.100000000000023" stroke="#858585" stroke-width="1" fill="none" shape-rendering="crispEdges"/>
<rect x="1164.4" y="466.5" width="35.59999999999991" height="16.100000000000023" stroke="#858585" stroke-width="1" fill="none" shape-rendering="crispEdges"/>
<rect x="1202.3" y="466.5" width="37.700000000000045" height="16.100000000000023" stroke="#858585" stroke-width="1" fill="none" shape-rendering="crispEdges"/>
<ellipse cx="1220" cy="474.5" rx="9" ry="5.5" stroke="#858585" fill="none"/>
<path d="M1170 485L1198.8 485" stroke="#858585" stroke-width="1" shape-rendering="crispEdges"/>
<path d="M1240 466.5L1268 466.5" stroke="#858585" stroke-width="1" shape-rendering="crispEdges"/>
<path d="M181 473.4L181 644" stroke="#858585" stroke-width="1" shape-rendering="crispEdges"/>
<path d="M186.6 473.4L186.6 644" stroke="#858585" stroke-width="1" shape-rendering="crispEdges"/>
<path d="M304.4 479L304.4 637" stroke="#858585" stroke-width="1" shape-rendering="crispEdges"/>
<path d="M310.8 479L310.8 637" stroke="#858585" stroke-width="1" shape-rendering="crispEdges"/>
<path d="M362 466.4L362 593.2" stroke="#858585" stroke-width="1" shape-rendering="crispEdges"/>
<path d="M366 466.4L366 593.2" stroke="#858585" stroke-width="1" shape-rendering="crispEdges"/>
<path d="M428 459.6L428 593.2" stroke="#858585" stroke-width="1" shape-rendering="crispEdges"/>
<path d="M434 459.6L434 593.2" stroke="#858585" stroke-width="1" shape-rendering="crispEdges"/>
<path d="M498 466.4L498 593.2" stroke="#858585" stroke-width="1" shape-rendering="crispEdges"/>
<path d="M502 466.4L502 593.2" stroke="#858585" stroke-width="1" shape-rendering="crispEdges"/>
<path d="M552 479L552 640" stroke="#858585" stroke-width="1" shape-rendering="crispEdges"/>
<path d="M558 479L558 640" stroke="#858585" stroke-width="1" shape-rendering="crispEdges"/>
<path d="M676 484.9L676 640" stroke="#858585" stroke-width="1" shape-rendering="crispEdges"/>
<path d="M682 484.9L682 640" stroke="#858585" stroke-width="1" shape-rendering="crispEdges"/>
<path d="M800.5 479L800.5 650.5" stroke="#858585" stroke-width="1" shape-rendering="crispEdges"/>
<path d="M805.5 479L805.5 650.5" stroke="#858585" stroke-width="1" shape-rendering="crispEdges"/>
<path d="M856 479L856 593.2" stroke="#858585" stroke-width="1" shape-rendering="crispEdges"/>
<path d="M860 479L860 593.2" stroke="#858585" stroke-width="1" shape-rendering="crispEdges"/>
<path d="M923.6 484.9L923.6 650.5" stroke="#858585" stroke-width="1" shape-rendering="crispEdges"/>
<path d="M929 484.9L929 650.5" stroke="#858585" stroke-width="1" shape-rendering="crispEdges"/>
<path d="M1170 485L1170 650.5" stroke="#858585" stroke-width="1" shape-rendering="crispEdges"/>
<path d="M1177.5 485L1177.5 650.5" stroke="#858585" stroke-width="1" shape-rendering="crispEdges"/>
<path d="M1241 466.5L1241 593.6" stroke="#858585" stroke-width="1" shape-rendering="crispEdges"/>
<path d="M1244 466.5L1244 593.6" stroke="#858585" stroke-width="1" shape-rendering="crispEdges"/>
<path d="M310.4 495L304.4 500L310.4 505M310.4 512L304.4 517L310.4 522" stroke="#858585" stroke-width="0.9" fill="none"/>
<path d="M504 495L498 500L504 505M504 512L498 517L504 522" stroke="#858585" stroke-width="0.9" fill="none"/>
<path d="M558 495L552 500L558 505M558 512L552 517L558 522" stroke="#858585" stroke-width="0.9" fill="none"/>
<path d="M806.5 495L800.5 500L806.5 505M806.5 512L800.5 517L806.5 522" stroke="#858585" stroke-width="0.9" fill="none"/>
<path d="M862 495L856 500L862 505M862 512L856 517L862 522" stroke="#858585" stroke-width="0.9" fill="none"/>
<path d="M1247 495L1241 500L1247 505M1247 512L1241 517L1247 522" stroke="#858585" stroke-width="0.9" fill="none"/>
<path d="M356 497L362 502L356 507M356 514L362 519L356 524" stroke="#858585" stroke-width="0.9" fill="none"/>
<path d="M422 497L428 502L422 507M422 514L428 519L422 524" stroke="#858585" stroke-width="0.9" fill="none"/>
<path d="M917.6 497L923.6 502L917.6 507M917.6 514L923.6 519L917.6 524" stroke="#858585" stroke-width="0.9" fill="none"/>
<path d="M310.8 593.2L362 593.2" stroke="#858585" stroke-width="1" shape-rendering="crispEdges"/>
<path d="M502 593.2L552 593.2" stroke="#858585" stroke-width="1" shape-rendering="crispEdges"/>
<path d="M805.5 593.2L856 593.2" stroke="#858585" stroke-width="1" shape-rendering="crispEdges"/>
<path d="M1244 593.6L1268 593.6" stroke="#858585" stroke-width="1" shape-rendering="crispEdges"/>
<path d="M310.8 599.5L552 599.5" stroke="#858585" stroke-width="1" shape-rendering="crispEdges"/>
<path d="M805.5 599.5L923.6 599.5" stroke="#858585" stroke-width="1" shape-rendering="crispEdges"/>
<path d="M1177.5 599.3L1268 599.3" stroke="#858585" stroke-width="1" shape-rendering="crispEdges"/>
<rect x="394" y="593.2" width="28" height="6.2999999999999545" stroke="#858585" stroke-width="0.8" fill="none" shape-rendering="crispEdges"/>
<path d="M394 596.3L422 596.3" stroke="#858585" stroke-width="0.8" shape-rendering="crispEdges"/>
<rect x="440" y="593.2" width="30" height="6.2999999999999545" stroke="#858585" stroke-width="0.8" fill="none" shape-rendering="crispEdges"/>
<path d="M440 596.3L470 596.3" stroke="#858585" stroke-width="0.8" shape-rendering="crispEdges"/>
<rect x="888" y="593.2" width="28" height="6.2999999999999545" stroke="#858585" stroke-width="0.8" fill="none" shape-rendering="crispEdges"/>
<path d="M888 596.3L916 596.3" stroke="#858585" stroke-width="0.8" shape-rendering="crispEdges"/>
<rect x="1184" y="593.2" width="28.59999999999991" height="6.2999999999999545" stroke="#858585" stroke-width="0.8" fill="none" shape-rendering="crispEdges"/>
<path d="M1184 596.3L1212.6 596.3" stroke="#858585" stroke-width="0.8" shape-rendering="crispEdges"/>
<path d="M322 593.2L328 600L334 593.2M338 593.2L344 600L350 593.2" stroke="#858585" stroke-width="0.8" fill="none"/>
<path d="M513 593.2L519 600L525 593.2M529 593.2L535 600L541 593.2" stroke="#858585" stroke-width="0.8" fill="none"/>
<path d="M818 593.2L824 600L830 593.2M834 593.2L840 600L846 593.2" stroke="#858585" stroke-width="0.8" fill="none"/>
<path d="M1256 593.2L1262 600L1268 593.2M1272 593.2L1278 600L1284 593.2" stroke="#858585" stroke-width="0.8" fill="none"/>
<rect x="366" y="566" width="62" height="27.200000000000045" stroke="#858585" stroke-width="1" fill="none" shape-rendering="crispEdges"/>
<path d="M366 563.5L428 563.5" stroke="#858585" stroke-width="1" shape-rendering="crispEdges"/>
<path d="M366 566L420 579.6L366 593.2M420 579.6L428 566M420 579.6L428 593.2" stroke="#858585" stroke-width="0.8" fill="none"/>
<rect x="434" y="566" width="64" height="27.200000000000045" stroke="#858585" stroke-width="1" fill="none" shape-rendering="crispEdges"/>
<path d="M434 563.5L498 563.5" stroke="#858585" stroke-width="1" shape-rendering="crispEdges"/>
<path d="M498 566L442 579.6L498 593.2M442 579.6L434 566M442 579.6L434 593.2" stroke="#858585" stroke-width="0.8" fill="none"/>
<rect x="860" y="566" width="63.60000000000002" height="27.200000000000045" stroke="#858585" stroke-width="1" fill="none" shape-rendering="crispEdges"/>
<path d="M860 563.5L923.6 563.5" stroke="#858585" stroke-width="1" shape-rendering="crispEdges"/>
<path d="M860 566L915 579.6L860 593.2M915 579.6L923.6 566M915 579.6L923.6 593.2" stroke="#858585" stroke-width="0.8" fill="none"/>
<rect x="1177.5" y="566.6" width="63.5" height="27.0" stroke="#858585" stroke-width="1" fill="none" shape-rendering="crispEdges"/>
<path d="M1177.5 564.1L1241 564.1" stroke="#858585" stroke-width="1" shape-rendering="crispEdges"/>
<path d="M1241 566.6L1185 580.1L1241 593.6M1185 580.1L1177.5 566.6M1185 580.1L1177.5 593.6" stroke="#858585" stroke-width="0.8" fill="none"/>
<ellipse cx="416" cy="552" rx="8" ry="6.5" stroke="#858585" fill="none"/>
<rect x="424" y="544" width="6" height="16" stroke="#858585" stroke-width="0.9" fill="none" shape-rendering="crispEdges"/>
<ellipse cx="447" cy="552" rx="8" ry="6.5" stroke="#858585" fill="none"/>
<rect x="433" y="544" width="6" height="16" stroke="#858585" stroke-width="0.9" fill="none" shape-rendering="crispEdges"/>
<ellipse cx="909" cy="551" rx="8" ry="6.5" stroke="#858585" fill="none"/>
<rect x="917" y="543" width="6" height="16" stroke="#858585" stroke-width="0.9" fill="none" shape-rendering="crispEdges"/>
<ellipse cx="1189" cy="551" rx="8" ry="6.5" stroke="#858585" fill="none"/>
<rect x="1175" y="543" width="6" height="16" stroke="#858585" stroke-width="0.9" fill="none" shape-rendering="crispEdges"/>
<rect x="186.6" y="562" width="19.099999999999994" height="19.299999999999955" stroke="#858585" stroke-width="1" fill="none" shape-rendering="crispEdges"/>
<rect x="186.6" y="581.3" width="64.0" height="28.300000000000068" stroke="#858585" stroke-width="1" fill="none" shape-rendering="crispEdges"/>
<rect x="188" y="585" width="9" height="20" stroke="#858585" stroke-width="0.8" fill="none" shape-rendering="crispEdges"/>
<path d="M197 600L205 608" stroke="#858585" stroke-width="0.8" fill="none"/>
<rect x="656.5" y="562.4" width="44.0" height="18.899999999999977" stroke="#858585" stroke-width="1" fill="none" shape-rendering="crispEdges"/>
<rect x="612" y="581.3" width="52.700000000000045" height="28.300000000000068" stroke="#858585" stroke-width="1" fill="none" shape-rendering="crispEdges"/>
<rect x="692.5" y="581.3" width="53.5" height="28.300000000000068" stroke="#858585" stroke-width="1" fill="none" shape-rendering="crispEdges"/>
<rect x="664.7" y="584" width="11.299999999999955" height="22" stroke="#858585" stroke-width="0.8" fill="none" shape-rendering="crispEdges"/>
<rect x="682" y="584" width="10.5" height="22" stroke="#858585" stroke-width="0.8" fill="none" shape-rendering="crispEdges"/>
<path d="M656 600L664.7 609.6M700.5 600L692 609.6" stroke="#858585" stroke-width="0.8" fill="none"/>
<path d="M193 650.4L1268 650.4" stroke="#858585" stroke-width="1" shape-rendering="crispEdges"/>
<path d="M193 652.5L1268 652.5" stroke="#858585" stroke-width="1" shape-rendering="crispEdges"/>
<path d="M193 654.5L1268 654.5" stroke="#858585" stroke-width="1" shape-rendering="crispEdges"/>
<path d="M193 656.4L1268 656.4" stroke="#858585" stroke-width="1" shape-rendering="crispEdges"/>
<rect x="916" y="651.4" width="19.5" height="4.0" fill="#000" shape-rendering="crispEdges"/>
<path d="M916 650.4L916 656.4" stroke="#858585" stroke-width="1" shape-rendering="crispEdges"/>
<path d="M935.5 650.4L935.5 656.4" stroke="#858585" stroke-width="1" shape-rendering="crispEdges"/>
<rect x="1164.4" y="651.4" width="18.799999999999955" height="4.0" fill="#000" shape-rendering="crispEdges"/>
<path d="M1164.4 650.4L1164.4 656.4" stroke="#858585" stroke-width="1" shape-rendering="crispEdges"/>
<path d="M1183.2 650.4L1183.2 656.4" stroke="#858585" stroke-width="1" shape-rendering="crispEdges"/>
<path d="M298.3 657Q298.3 667 307.5 667Q316.7 667 316.7 657" stroke="#858585" stroke-width="1" fill="none"/>
<path d="M181 645Q176 651 181 657Q186 660 193 657" stroke="#858585" stroke-width="1" fill="none"/>
<path d="M176.5 480L155.3 509.6H139" stroke="#00d000" stroke-width="1" fill="none"/>
<path d="M176.5 482L156 522.3H139" stroke="#00d000" stroke-width="1" fill="none"/>
<circle cx="176.5" cy="476" r="2.8" stroke="#e0c000" stroke-width="1" fill="none"/>
<path d="M206 480L218.5 509.6H244" stroke="#00d000" stroke-width="1" fill="none"/>
<path d="M206 482L216.4 523.5H247" stroke="#00d000" stroke-width="1" fill="none"/>
<circle cx="206" cy="476" r="2.8" stroke="#00d000" stroke-width="1" fill="none"/>
<path d="M424 478L403 509H374" stroke="#00d000" stroke-width="1" fill="none"/>
<path d="M424 480L404 522H374" stroke="#00d000" stroke-width="1" fill="none"/>
<circle cx="424" cy="474" r="2.8" stroke="#e0c000" stroke-width="1" fill="none"/>
<path d="M454 478L467 509H493" stroke="#00d000" stroke-width="1" fill="none"/>
<path d="M454 480L464 522H497" stroke="#00d000" stroke-width="1" fill="none"/>
<circle cx="454" cy="474" r="2.8" stroke="#00d000" stroke-width="1" fill="none"/>
<path d="M672 482L651 509H624" stroke="#00d000" stroke-width="1" fill="none"/>
<path d="M672 484L653 522H624" stroke="#00d000" stroke-width="1" fill="none"/>
<circle cx="672" cy="478" r="2.8" stroke="#e0c000" stroke-width="1" fill="none"/>
<path d="M701 479L714 509H745" stroke="#00d000" stroke-width="1" fill="none"/>
<path d="M701 481L713 522H745" stroke="#00d000" stroke-width="1" fill="none"/>
<circle cx="701" cy="475" r="2.8" stroke="#00d000" stroke-width="1" fill="none"/>
<path d="M919 484L898 509H870" stroke="#00d000" stroke-width="1" fill="none"/>
<path d="M919 486L900 522H870" stroke="#00d000" stroke-width="1" fill="none"/>
<circle cx="919" cy="480" r="2.8" stroke="#e0c000" stroke-width="1" fill="none"/>
<path d="M949 478L962 509H988" stroke="#00d000" stroke-width="1" fill="none"/>
<path d="M949 480L960 522H992" stroke="#00d000" stroke-width="1" fill="none"/>
<circle cx="949" cy="474" r="2.8" stroke="#00d000" stroke-width="1" fill="none"/>
<path d="M1167 482L1146 509H1119" stroke="#00d000" stroke-width="1" fill="none"/>
<path d="M1167 484L1146 522H1118" stroke="#00d000" stroke-width="1" fill="none"/>
<circle cx="1167" cy="478" r="2.8" stroke="#e0c000" stroke-width="1" fill="none"/>
<path d="M1196 480L1210 509H1237" stroke="#00d000" stroke-width="1" fill="none"/>
<path d="M1196 482L1208 522H1240" stroke="#00d000" stroke-width="1" fill="none"/>
<circle cx="1196" cy="476" r="2.8" stroke="#00d000" stroke-width="1" fill="none"/>
<circle cx="176.5" cy="470" r="2.5" stroke="#858585" stroke-width="0.9" fill="none"/>
<circle cx="424" cy="470" r="2.5" stroke="#858585" stroke-width="0.9" fill="none"/>
<circle cx="672" cy="474" r="2.5" stroke="#858585" stroke-width="0.9" fill="none"/>
<circle cx="919" cy="476" r="2.5" stroke="#858585" stroke-width="0.9" fill="none"/>
<circle cx="1167" cy="474" r="2.5" stroke="#858585" stroke-width="0.9" fill="none"/>
<path d="M200.3 434.9V480.5H204.3" stroke="#0000c8" stroke-width="1" fill="none" shape-rendering="crispEdges"/>
<path d="M205.3 444.3L205.3 474" stroke="#00d000" stroke-width="1" shape-rendering="crispEdges"/>
<path d="M449.6 434.9V480.5H453.6" stroke="#0000c8" stroke-width="1" fill="none" shape-rendering="crispEdges"/>
<path d="M453.9 444.3L453.9 474" stroke="#00d000" stroke-width="1" shape-rendering="crispEdges"/>
<path d="M697.4 434.9V480.5H701.4" stroke="#0000c8" stroke-width="1" fill="none" shape-rendering="crispEdges"/>
<path d="M702.5 444.3L702.5 474" stroke="#00d000" stroke-width="1" shape-rendering="crispEdges"/>
<path d="M944 434.9V480.5H948" stroke="#0000c8" stroke-width="1" fill="none" shape-rendering="crispEdges"/>
<path d="M949.5 444.3L949.5 474" stroke="#00d000" stroke-width="1" shape-rendering="crispEdges"/>
<path d="M1192.6 434.9V480.5H1196.6" stroke="#0000c8" stroke-width="1" fill="none" shape-rendering="crispEdges"/>
<path d="M1196.6 444.3L1196.6 474" stroke="#00d000" stroke-width="1" shape-rendering="crispEdges"/>
<text transform="translate(145 505) scale(0.6 1)" font-family="Liberation Sans" font-size="11.55" fill="#e8e8e8" text-anchor="middle">-1</text>
<text transform="translate(145 519) scale(0.6 1)" font-family="Liberation Sans" font-size="11.55" fill="#e8e8e8" text-anchor="middle">-1</text>
<text transform="translate(231 505) scale(0.6 1)" font-family="Liberation Sans" font-size="11.55" fill="#e8e8e8" text-anchor="middle">JL-1</text>
<text transform="translate(228 519) scale(0.6 1)" font-family="Liberation Sans" font-size="11.55" fill="#e8e8e8" text-anchor="middle">RJL-1</text>
<text transform="translate(383 505) scale(0.6 1)" font-family="Liberation Sans" font-size="11.55" fill="#e8e8e8" text-anchor="middle">TL-2</text>
<text transform="translate(383 519) scale(0.6 1)" font-family="Liberation Sans" font-size="11.55" fill="#e8e8e8" text-anchor="middle">WL-2</text>
<text transform="translate(478 505) scale(0.6 1)" font-family="Liberation Sans" font-size="11.55" fill="#e8e8e8" text-anchor="middle">JL-2</text>
<text transform="translate(478 519) scale(0.6 1)" font-family="Liberation Sans" font-size="11.55" fill="#e8e8e8" text-anchor="middle">RJL-2</text>
<text transform="translate(633 505) scale(0.6 1)" font-family="Liberation Sans" font-size="11.55" fill="#e8e8e8" text-anchor="middle">TL-3</text>
<text transform="translate(633 519) scale(0.6 1)" font-family="Liberation Sans" font-size="11.55" fill="#e8e8e8" text-anchor="middle">WL-3</text>
<text transform="translate(724 505) scale(0.6 1)" font-family="Liberation Sans" font-size="11.55" fill="#e8e8e8" text-anchor="middle">JL-3</text>
<text transform="translate(725 519) scale(0.6 1)" font-family="Liberation Sans" font-size="11.55" fill="#e8e8e8" text-anchor="middle">RJL-3</text>
<text transform="translate(880 505) scale(0.6 1)" font-family="Liberation Sans" font-size="11.55" fill="#e8e8e8" text-anchor="middle">TL-4</text>
<text transform="translate(880 519) scale(0.6 1)" font-family="Liberation Sans" font-size="11.55" fill="#e8e8e8" text-anchor="middle">WL-4</text>
<text transform="translate(972 505) scale(0.6 1)" font-family="Liberation Sans" font-size="11.55" fill="#e8e8e8" text-anchor="middle">JL-4</text>
<text transform="translate(972 519) scale(0.6 1)" font-family="Liberation Sans" font-size="11.55" fill="#e8e8e8" text-anchor="middle">RJL-4</text>
<text transform="translate(1128 505) scale(0.6 1)" font-family="Liberation Sans" font-size="11.55" fill="#e8e8e8" text-anchor="middle">TL-5</text>
<text transform="translate(1128 519) scale(0.6 1)" font-family="Liberation Sans" font-size="11.55" fill="#e8e8e8" text-anchor="middle">WL-5</text>
<text transform="translate(1222 505) scale(0.6 1)" font-family="Liberation Sans" font-size="11.55" fill="#e8e8e8" text-anchor="middle">JL-5</text>
<text transform="translate(1222 519) scale(0.6 1)" font-family="Liberation Sans" font-size="11.55" fill="#e8e8e8" text-anchor="middle">RJL-5</text>
<text transform="translate(253 510) scale(0.85 1)" font-family="Liberation Sans" font-size="9" fill="#a8a8a8" text-anchor="middle">家属陪护</text>
<text transform="translate(595 510) scale(0.85 1)" font-family="Liberation Sans" font-size="9" fill="#a8a8a8" text-anchor="middle">家属陪护</text>
<text transform="translate(752 510) scale(0.85 1)" font-family="Liberation Sans" font-size="9" fill="#a8a8a8" text-anchor="middle">家属陪护</text>
<text transform="translate(334 480) scale(0.85 1)" font-family="Liberation Sans" font-size="9" fill="#a8a8a8" text-anchor="middle">储物</text>
<text transform="translate(522 480) scale(0.85 1)" font-family="Liberation Sans" font-size="9" fill="#a8a8a8" text-anchor="middle">储物</text>
<text transform="translate(828 480) scale(0.85 1)" font-family="Liberation Sans" font-size="9" fill="#a8a8a8" text-anchor="middle">储物</text>
<text transform="translate(1264 480) scale(0.85 1)" font-family="Liberation Sans" font-size="9" fill="#a8a8a8" text-anchor="middle">储物</text>
<text transform="translate(334 578) scale(0.85 1)" font-family="Liberation Sans" font-size="9" fill="#a8a8a8" text-anchor="middle">备餐</text>
<text transform="translate(520 578) scale(0.85 1)" font-family="Liberation Sans" font-size="9" fill="#a8a8a8" text-anchor="middle">备餐</text>
<text transform="translate(832 578) scale(0.85 1)" font-family="Liberation Sans" font-size="9" fill="#a8a8a8" text-anchor="middle">备餐</text>
<text transform="translate(1262 578) scale(0.85 1)" font-family="Liberation Sans" font-size="9" fill="#a8a8a8" text-anchor="middle">备餐</text>
<text transform="translate(250 595) scale(0.85 1)" font-family="Liberation Sans" font-size="9" fill="#a8a8a8" text-anchor="middle">豪华病房</text>
<text transform="translate(600 595) scale(0.85 1)" font-family="Liberation Sans" font-size="9" fill="#a8a8a8" text-anchor="middle">豪华病房</text>
<text transform="translate(746 595) scale(0.85 1)" font-family="Liberation Sans" font-size="9" fill="#a8a8a8" text-anchor="middle">豪华病房</text>
<text transform="translate(412 630) scale(0.85 1)" font-family="Liberation Sans" font-size="9" fill="#a8a8a8" text-anchor="middle">阳台</text>
<text transform="translate(866 630) scale(0.85 1)" font-family="Liberation Sans" font-size="9" fill="#a8a8a8" text-anchor="middle">阳台</text>
<text transform="translate(1228 623) scale(0.85 1)" font-family="Liberation Sans" font-size="9" fill="#a8a8a8" text-anchor="middle">阳台</text>
<text transform="translate(1038 546) scale(0.85 1)" font-family="Liberation Sans" font-size="9" fill="#a8a8a8" text-anchor="middle">病人活动室</text>
<path d="M236 660L236 676" stroke="#858585" stroke-width="1" shape-rendering="crispEdges"/>
<path d="M641 660L641 676" stroke="#858585" stroke-width="1" shape-rendering="crispEdges"/>
<path d="M70.2 666L172 666" stroke="#858585" stroke-width="1" shape-rendering="crispEdges"/>
<path d="M70.2 666L70.2 676" stroke="#858585" stroke-width="1" shape-rendering="crispEdges"/>
<circle cx="198" cy="661" r="2.8" stroke="#00d8d8" stroke-width="1" fill="none"/>
<path d="M197 664L190 676" stroke="#00d000" stroke-width="1"/>
<circle cx="550" cy="662" r="2.8" stroke="#00d8d8" stroke-width="1" fill="none"/>
<path d="M550 665L550 676" stroke="#00d000" stroke-width="1" shape-rendering="crispEdges"/>
<text transform="translate(168 674) scale(0.6 1)" font-family="Liberation Sans" font-size="9.9" fill="#e2e2e2" text-anchor="middle">YL-2</text>
<text transform="translate(228 670) scale(0.72 1)" font-family="Liberation Sans" font-size="7" fill="#a8a8a8" text-anchor="middle">8号</text>
<text transform="translate(634 672) scale(0.72 1)" font-family="Liberation Sans" font-size="7" fill="#a8a8a8" text-anchor="middle">8号</text>
<text transform="translate(392 670) scale(0.72 1)" font-family="Liberation Sans" font-size="7" fill="#a8a8a8" text-anchor="middle">8号</text>
<path d="M400 660L400 676" stroke="#858585" stroke-width="1" shape-rendering="crispEdges"/>
<rect x="421.5" y="651.4" width="19.69999999999999" height="4.0" fill="#000" shape-rendering="crispEdges"/>
<path d="M421.5 650.4L421.5 656.4" stroke="#858585" stroke-width="1" shape-rendering="crispEdges"/>
<path d="M441.2 650.4L441.2 656.4" stroke="#858585" stroke-width="1" shape-rendering="crispEdges"/>
<text transform="translate(71 661) scale(0.8 1)" font-family="Liberation Sans" font-size="10" fill="#a8a8a8" text-anchor="start">⑩1 层为屋顶平台</text>
<path d="M57.6 638L57.6 676" stroke="#858585" stroke-width="1" shape-rendering="crispEdges"/>
<path d="M63.9 638L63.9 676" stroke="#858585" stroke-width="1" shape-rendering="crispEdges"/>
<circle cx="66" cy="660" r="2.8" stroke="#00d8d8" stroke-width="1" fill="none"/>
<path d="M66 663L66 676" stroke="#00d000" stroke-width="1" shape-rendering="crispEdges"/>
<circle cx="66" cy="654" r="2.2" stroke="#858585" stroke-width="1" fill="none"/>
<path d="M0 92.2L10 92.2" stroke="#00d000" stroke-width="1" shape-rendering="crispEdges"/>
<path d="M0 123.3L10 123.3" stroke="#00d000" stroke-width="1" shape-rendering="crispEdges"/>
<path d="M0 244L10 244" stroke="#00d000" stroke-width="1" shape-rendering="crispEdges"/>
<path d="M0 368L10 368" stroke="#00d000" stroke-width="1" shape-rendering="crispEdges"/>
<path d="M0 463L10 463" stroke="#00d000" stroke-width="1" shape-rendering="crispEdges"/>
<path d="M0 653.3L10 653.3" stroke="#00d000" stroke-width="1" shape-rendering="crispEdges"/>
<path d="M0 332.8L10 332.8" stroke="#999" stroke-width="1" shape-rendering="crispEdges"/>
<path d="M0 498.4L10 498.4" stroke="#999" stroke-width="1" shape-rendering="crispEdges"/>
<path d="M0 653.3L42 653.3" stroke="#00d000" stroke-width="1" shape-rendering="crispEdges"/>
<path d="M701.5 368.6V389.6Q723 389.6 723.4 371M744.9 368.6V389.6Q724 389.6 723.4 371" stroke="#858585" stroke-width="1" fill="none"/>
<path d="M700 371.5L701.5 371.5" stroke="#858585" stroke-width="1" shape-rendering="crispEdges"/>
<path d="M744.9 371.5L750 371.5" stroke="#858585" stroke-width="1" shape-rendering="crispEdges"/>
<text transform="translate(735 449) scale(0.6 1)" font-family="Liberation Sans" font-size="11.0" fill="#e2e2e2" text-anchor="middle">J</text>
<circle cx="801.5" cy="660.5" r="2.8" stroke="#00d8d8" stroke-width="1" fill="none"/>
<path d="M801 663L793 676" stroke="#00d000" stroke-width="1"/>
<path d="M805.5 660L805.5 676" stroke="#858585" stroke-width="1" shape-rendering="crispEdges"/>
<text transform="translate(772 676) scale(0.6 1)" font-family="Liberation Sans" font-size="9.9" fill="#e2e2e2" text-anchor="middle">YL-2</text>
<path d="M794 660Q800 667 812 660" stroke="#858585" stroke-width="0.8" fill="none"/>
<rect x="180.2" y="133.2" width="13.5" height="12.800000000000011" fill="#808080" shape-rendering="crispEdges"/>
<rect x="298" y="133.2" width="6.399999999999977" height="12.800000000000011" fill="#808080" shape-rendering="crispEdges"/>
<rect x="304.4" y="76" width="6.600000000000023" height="295.5" fill="#808080" shape-rendering="crispEdges"/>
<rect x="405.8" y="76" width="6.099999999999966" height="156" fill="#808080" shape-rendering="crispEdges"/>
<rect x="405.8" y="282" width="6.099999999999966" height="13.699999999999989" fill="#808080" shape-rendering="crispEdges"/>
<rect x="405.8" y="342.4" width="6.099999999999966" height="29.100000000000023" fill="#808080" shape-rendering="crispEdges"/>
<rect x="180.5" y="358" width="12.5" height="13.5" fill="#808080" shape-rendering="crispEdges"/>
<rect x="298" y="364.4" width="113.89999999999998" height="7.100000000000023" fill="#808080" shape-rendering="crispEdges"/>
<rect x="298" y="346" width="6.399999999999977" height="25.5" fill="#808080" shape-rendering="crispEdges"/>
<rect x="311" y="281.8" width="94.80000000000001" height="6.800000000000011" fill="#808080" shape-rendering="crispEdges"/>
<rect x="544.7" y="241.5" width="20.299999999999955" height="18.899999999999977" fill="#808080" shape-rendering="crispEdges"/>
<path d="M1043 99.2V86Q1043 81 1050 81Q1057 81 1057 86V99.2Z" fill="#808080"/>
<rect x="793.4" y="241.5" width="19.200000000000045" height="18.899999999999977" fill="#808080" shape-rendering="crispEdges"/>
<rect x="1039.7" y="241.5" width="20.299999999999955" height="18.899999999999977" fill="#808080" shape-rendering="crispEdges"/>
<rect x="748.4" y="308" width="51.10000000000002" height="6.600000000000023" fill="#808080" shape-rendering="crispEdges"/>
<rect x="799.5" y="304.2" width="13.5" height="13.600000000000023" fill="#808080" shape-rendering="crispEdges"/>
<rect x="799.5" y="317.8" width="6.5" height="6.5" fill="#808080" shape-rendering="crispEdges"/>
<rect x="748.4" y="308" width="6.5" height="63.5" fill="#808080" shape-rendering="crispEdges"/>
<rect x="748.4" y="364.4" width="64.60000000000002" height="7.100000000000023" fill="#808080" shape-rendering="crispEdges"/>
<rect x="799.5" y="359.2" width="13.5" height="12.300000000000011" fill="#808080" shape-rendering="crispEdges"/>
<rect x="180.2" y="459.9" width="13.5" height="13.5" fill="#808080" shape-rendering="crispEdges"/>
<rect x="298" y="459.9" width="19.19999999999999" height="19.100000000000023" fill="#808080" shape-rendering="crispEdges"/>
<rect x="544.7" y="459.6" width="20.299999999999955" height="19.399999999999977" fill="#808080" shape-rendering="crispEdges"/>
<rect x="793.4" y="459.6" width="19.200000000000045" height="19.399999999999977" fill="#808080" shape-rendering="crispEdges"/>
<rect x="1039.7" y="459.7" width="20.299999999999955" height="19.30000000000001" fill="#808080" shape-rendering="crispEdges"/>
<rect x="180.5" y="644" width="12.5" height="13" fill="#808080" shape-rendering="crispEdges"/>
<rect x="298.3" y="637" width="18.399999999999977" height="20" fill="#808080" shape-rendering="crispEdges"/>
<rect x="1039.7" y="637" width="20.299999999999955" height="19" fill="#808080" shape-rendering="crispEdges"/></svg>
<div id="tb">
<!-- icons -->
<svg style="position:absolute;left:0;top:0" width="1268" height="52">
<g fill="#16a0e6" stroke="none">
 <path d="M13 12h6l1.5 2H30v3H17l-4 6z"/>
 <path d="M16.5 17.5H32l-4 7H13z"/>
</g>
<g fill="none" stroke="#16a0e6" stroke-width="1.8">
 <path d="M70.5 13.2A7.2 7.2 0 1 1 68.8 21.5"/>
 <path d="M74.5 13.5v5h4" /></g><path d="M66 17.5l3.6-5 3 4.5z" fill="#16a0e6"/><g fill="none" stroke="#16a0e6" stroke-width="1.8">
 <path d="M136.5 24.6h-2.3a3.9 3.9 0 0 1 -0.6 -7.7a6.6 6.6 0 0 1 12.6 -1.6a4.6 4.6 0 0 1 1.6 9.3h-2.2"/>
 <path d="M137.3 25v-3.6a2 2 0 0 1 2-2h3.8a2 2 0 0 1 2 2v3.6M137.3 22.6h7.8" stroke-width="1.5"/>
</g>
<g fill="#16a0e6">
 <rect x="191" y="14.3" width="6.8" height="6.8"/><rect x="189.6" y="12.9" width="9.6" height="9.6" fill="none" stroke="#16a0e6" stroke-width="0.6"/>
 <path d="M187.5 14.5v-3.5h3.5v1.4h-2.1v2.1zM201 14.5v-3.5h-3.5v1.4h2.1v2.1zM187.5 21v3.5h3.5v-1.4h-2.1v-2.1zM201 21v3.5h-3.5v-1.4h2.1v-2.1z"/>
 <path d="M248.5 10.7l6.5 3.6-6.5 3.6-6.5-3.6z"/>
</g>
<g fill="none" stroke="#16a0e6" stroke-width="1.6">
 <path d="M242.3 17.6l6.2 3.4 6.2-3.4"/>
 <path d="M242.3 21l6.2 3.4 6.2-3.4"/>
</g>
<g fill="none" stroke="#b0b0b0" stroke-width="1.1">
 <path d="M304 10.5l-5.5 5 5.5 5v-3h4c4 0 6 2.5 6.5 7.5c1-7-2-11-7-11h-3.5z"/>
 <path d="M351 10.5l5.5 5-5.5 5v-3h-4c-4 0-6 2.5-6.5 7.5c-1-7 2-11 7-11h3.5z"/>
</g>
<circle cx="391.8" cy="18.6" r="11" fill="#fbf3df" stroke="#c2912c" stroke-width="1.6"/>
<text x="391.8" y="22.8" font-family="Liberation Serif" font-weight="bold" font-size="11.5" fill="#c9962a" text-anchor="middle" letter-spacing="-0.6">VIP</text>
<rect x="415" y="4.5" width="41" height="44" rx="3" fill="#ebf3fd" stroke="#9fbdf0" stroke-width="1"/>
<g fill="none" stroke="#1aa0e6" stroke-width="1.4">
 <path d="M426 15.4h18M425.5 12v7M444.5 12v7"/>
 <rect x="425.5" y="21.3" width="18" height="6.2"/>
 <path d="M428 21.3v2.5M430.5 21.3v2M433 21.3v2.5M435.5 21.3v2M438 21.3v2.5M440.5 21.3v2" stroke-width="1"/>
</g>
<path d="M427 15.4l3-2.2v4.4zM443 15.4l-3-2.2v4.4z" fill="#1aa0e6"/>

<g fill="none" stroke="#c39a3c" stroke-width="1.3">
 <path d="M484 27.5h-5.5V8.6h18.8v13"/>
 <path d="M482 20.5l4-4 2.5 2.5 4-4"/>
 <path d="M484 26h12M484 23.5v5M496 23.5v5"/>
</g>
<g fill="#c39a3c"><rect x="482" y="21" width="1.4" height="3"/><rect x="485" y="19.5" width="1.4" height="4.5"/><rect x="488" y="20.5" width="1.4" height="3.5"/><rect x="491" y="18.5" width="1.4" height="5.5"/></g>
<g fill="none" stroke="#c39a3c" stroke-width="1.4">
 <path d="M556.8 14.3V8.6h12.2v11.2h-5.5"/>
 <rect x="550.4" y="14.3" width="12.6" height="12.8"/>
</g>
<rect x="619" y="7" width="23.8" height="23.8" rx="4.5" fill="#1b8fdf"/>
<path d="M624.5 11.5h8l2 2v12.5h-10z" fill="#fff"/>
<text x="629" y="22" font-family="Liberation Sans" font-size="5.5" font-weight="bold" fill="#1b8fdf" text-anchor="middle">CAD</text>
<path d="M633 25.5l6-7" stroke="#fff" stroke-width="2.4"/>
<g fill="none" stroke="#c39a3c" stroke-width="1.3">
 <rect x="692.8" y="8.6" width="18.8" height="18.6"/>
 <circle cx="706.3" cy="13.8" r="2.6"/>
 <rect x="704.3" y="19.4" width="4.2" height="4.2"/>
 <path d="M695.5 19.5l2.6-4.4 2.6 4.4z"/>
</g>
<path d="M747 9h18v5.3c-1-2-2-3-4.5-3h-2.8V26.5h-3.4V11.3h-2.8c-2.5 0-3.5 1-4.5 3z" fill="none" stroke="#1aa0e6" stroke-width="1.5"/>
<path d="M797 25.5l14.3-14.5" stroke="#c39a3c" stroke-width="1.6"/>
<g fill="none" stroke="#1aa0e6" stroke-width="1.4">
 <rect x="852.5" y="9.5" width="8" height="8"/>
 <ellipse cx="851" cy="23.2" rx="6" ry="3.3"/>
 <path d="M842 12c0 4 3 5 5 3l2.6-4.4c.5-1-1-2-1.7-1.2l-3 5"/>
 <path d="M927 0"/>
</g>
<g fill="none" stroke="#1aa0e6" stroke-width="1.3">
 <path d="M884 21.5l9.5-12.7 7.5 6-9.5 12.3h-2.4z"/>
 <path d="M888.5 15.5l7.5 6M891 27h9"/>
</g>
<path d="M893.5 9.5l7 5.6-4.5 5.6-7-5.6z" fill="#8fd0f4"/>
<g fill="none" stroke="#1aa0e6" stroke-width="1.5">
 <path d="M937 18c5-7 13.5-7 18.5 0c-5 7-13.5 7-18.5 0z"/>
 <circle cx="946.3" cy="18" r="2.6"/>
 <path d="M938.5 26.3l16.5-16"/>
 <path d="M1012 10.5h-5.5a2 2 0 0 0 -2 2v12a2 2 0 0 0 2 2h11.5a2 2 0 0 0 2 -2v-5.5"/>
 <path d="M1008.5 19.5l11-10.5M1012.5 10h6.5v6.5"/>
 <path d="M1009 13.5v6h6"/>
</g>
<g fill="#1aa0e6">
 <path d="M1078 9.5c1-1.5 3-1.5 4 0l1 .8-9.5 13.5-5 3 .8-5.5z"/>
</g>
<g fill="none" stroke="#1aa0e6" stroke-width="1.3">
 <path d="M1080.5 16.5l4.5 2.6v5.2l-4.5 2.6-4.5-2.6v-5.2z"/>
 <circle cx="1080.5" cy="21.8" r="1.6"/>
</g>
<text x="1130.7" y="16.5" font-family="Liberation Mono" font-size="8.5" font-weight="bold" fill="#1aa0e6" text-anchor="middle">A:B</text>
<g fill="none" stroke="#1aa0e6" stroke-width="1.1">
 <rect x="1121" y="20.5" width="19.5" height="6"/>
 <path d="M1123.5 20.5v2.3M1126 20.5v1.6M1128.5 20.5v2.3M1131 20.5v1.6M1133.5 20.5v2.3M1136 20.5v1.6M1138.5 20.5v2.3"/>
</g>
<g fill="none" stroke="#1aa0e6" stroke-width="1.5">
 <path d="M1194 9h-12.5v17h12.5"/>
 <circle cx="1191" cy="16.8" r="5.6"/>
 <path d="M1195 21l4 4"/>
</g>
<text x="1191" y="19.6" font-family="Liberation Sans" font-size="8" fill="#1aa0e6" text-anchor="middle">A</text>
<g fill="#1aa0e6"><rect x="1183.5" y="12" width="1" height="1"/><rect x="1183.5" y="15.5" width="1" height="1"/><rect x="1183.5" y="19" width="1" height="1"/><rect x="1183.5" y="22.5" width="1" height="1"/></g>
<path d="M1259 25.5l2 1.6-2 1.6M1262 25.5l2 1.6-2 1.6" fill="none" stroke="#222" stroke-width="1"/>
</svg>
<div class="sep" style="left:283px"></div>
<div class="sep" style="left:524px"></div>
<div class="sep" style="left:595px"></div>
<div class="sep" style="left:667px"></div>
<div class="sep" style="left:1154px"></div>
<div class="lb" style="left:21.7px">打开</div>
<div class="lb" style="left:75px">最近打开</div>
<div class="lb" style="left:140.7px">快看云盘</div>
<div class="lb" style="left:194px">窗口</div>
<div class="lb" style="left:248px">图层管理</div>
<div class="lb dis" style="left:307px">撤销</div>
<div class="lb dis" style="left:349px">恢复</div>
<div class="lb gold" style="left:391.7px">会员</div>
<div class="lb" style="left:434.7px">测量</div>
<div class="lb" style="left:488px">测量统计</div>
<div class="lb" style="left:560px">图纸对比</div>
<div class="lb" style="left:631px;top:32px">编辑助手</div>
<div class="lb" style="left:702.4px">图形识别</div>
<div class="lb" style="left:756px">文字</div>
<div class="lb" style="left:803.5px">画直线</div>
<div class="lb" style="left:850.7px">形状</div>
<div class="lb" style="left:892.4px">删除</div>
<div class="lb" style="left:946px">隐藏标注</div>
<div class="lb" style="left:1011.7px">导入导出</div>
<div class="lb" style="left:1077.4px">标注设置</div>
<div class="lb" style="left:1131px">比例</div>
<div class="lb" style="left:1190px">文字查找</div>
</div>
<div id="tabs">
 <div class="tab" style="left:1px;width:154px;background:linear-gradient(#e9eef6,#c3d3e8);border:1px solid #9ab6dc;border-bottom:none;font-weight:bold;color:#111">
  <span style="position:absolute;left:24px;top:0;letter-spacing:0.5px">给排水施工图<span style="font-family:'Liberation Mono';font-size:11px;letter-spacing:0">_t3</span></span>
  <span style="position:absolute;left:137px;top:0;font-weight:normal;color:#555;font-family:'Liberation Sans'">✕</span>
 </div>
 <div class="tab" style="left:155px;width:154px;background:#f2f2f2;border:1px solid #8a8a8a;border-bottom:none;color:#222">
  <span style="position:absolute;left:32px;top:0">水施系统图<span style="font-family:'Liberation Mono';font-size:11px">_t3</span></span>
  <span style="position:absolute;left:137px;top:0;color:#555;font-family:'Liberation Sans'">✕</span>
 </div>
 <svg style="position:absolute;left:1248px;top:3px" width="16" height="14"><rect x="1" y="2" width="13" height="1.6" fill="#111"/><path d="M1 5h13l-6.5 7z" fill="#111"/></svg>
</div>
<div id="panel">
 <div style="position:absolute;left:8px;top:7px;font-size:12px;color:#8a8a8a">测量</div>
 <div style="position:absolute;left:108px;top:6px;width:20px;height:20px;background:#dadada;color:#f4f4f4;font-size:11px;line-height:20px;text-align:center;font-family:'Liberation Sans'">✕</div>
 <div class="pi" style="top:27.90px"><svg width="17" height="16" viewBox="0 0 17 16" fill="none" stroke="#1aa0e6"><path d="M3 3l10 10M1.5 4.5l3-3M11.5 14.5l3-3" stroke-width="1.2"/><path d="M3 3l3.5 1-2.5 2.5zM13 13l-3.5-1 2.5-2.5z" fill="#1aa0e6" stroke="none"/></svg>对齐</div>
<div class="pi" style="top:54.23px"><svg width="17" height="16" viewBox="0 0 17 16" fill="none" stroke="#1aa0e6"><path d="M1.5 8h13M1.5 4.5v7M14.5 4.5v7" stroke-width="1.2"/><path d="M2 8l3-2v4zM14 8l-3-2v4z" fill="#1aa0e6" stroke="none"/></svg>线性</div>
<div class="pi" style="top:80.56px"><svg width="17" height="16" viewBox="0 0 17 16" fill="none" stroke="#1aa0e6"><path d="M2 2.5L14 8v3H2z" stroke-width="1.1"/><path d="M3 8l3-3M5 10.5l5-5M8 10.5l4-4M11.5 10.5l2-2" stroke-width="0.8"/><path d="M2 13.5h12M2 12v3M14 12v3" stroke-width="1"/></svg>面积</div>
<div class="pi" style="top:106.89px"><svg width="17" height="16" viewBox="0 0 17 16" fill="none" stroke="#1aa0e6"><rect x="1" y="1.5" width="15" height="9" fill="#a9dcf6" stroke="#5bbbee" stroke-width="1"/><path d="M2 9l7-7M6 10l8-8M10 10l5-5" stroke="#eaf6fd" stroke-width="1"/><path d="M1 13.5h15M1 12v3M16 12v3" stroke-width="1"/></svg>矩形面积</div>
<div class="pi" style="top:133.22px"><svg width="17" height="16" viewBox="0 0 17 16" fill="none" stroke="#1aa0e6"><rect x="1" y="11" width="4" height="4" stroke-width="1"/><path d="M3 11V7.5c0-1.5 1-2.5 2.5-2.5h2M5.5 8.5h2" stroke-width="1"/><path d="M8 2l2 2.5M10 2l-2 2.5M12 3.5h3.5M8 7l1 1.3 1-1.3M9 8.3v1.5M12 8.5h3.5" stroke-width="1.1"/></svg>坐标标注</div>
<div class="pi" style="top:159.55px"><svg width="17" height="16" viewBox="0 0 17 16" fill="none" stroke="#1aa0e6"><text x="8" y="6.8" font-family="Liberation Mono" font-size="7" font-weight="bold" fill="#1aa0e6" stroke="none" text-anchor="middle">A:B</text><rect x="1" y="9.5" width="15" height="5" stroke-width="1"/><path d="M3 9.5v2M5.5 9.5v1.5M8 9.5v2M10.5 9.5v1.5M13 9.5v2" stroke-width="0.8"/></svg>设置标注比例</div>
<div class="pi" style="top:185.88px"><svg width="17" height="16" viewBox="0 0 17 16" fill="none" stroke="#c39a3c"><path d="M3 14c0-6 3.5-10 10-10" stroke-width="1.4"/><path d="M6 13c0-3.5 2-6 6-6" stroke-width="1.1"/><path d="M11 2.5l3 1.5-2 2.5" stroke-width="1.1"/></svg>弧长</div>
<div class="pi" style="top:212.21px"><svg width="17" height="16" viewBox="0 0 17 16" fill="none" stroke="#c39a3c"><path d="M2 2l5 4.5L4 14M7 6.5L14 3" stroke-width="1.3"/><circle cx="2.5" cy="2.5" r="1.6" fill="#c39a3c"/><path d="M8.5 6l1.5 3 2.5-1.5" stroke-width="1"/></svg>点到直线的距离</div>
<div class="pi" style="top:238.54px"><svg width="17" height="16" viewBox="0 0 17 16" fill="none" stroke="#c39a3c"><path d="M6.5 3c-4 4-3 7 0 9.5l3.5 1.5h4" stroke-width="1.2"/><circle cx="6.5" cy="3" r="1.5" fill="#c39a3c"/><circle cx="3.5" cy="8.5" r="1.5" fill="#c39a3c"/><circle cx="8.5" cy="13.5" r="1.5" fill="#c39a3c"/><circle cx="14" cy="14" r="1.5" fill="#c39a3c"/></svg>连续测量</div>
<div class="pi" style="top:264.87px"><svg width="17" height="16" viewBox="0 0 17 16" fill="none" stroke="#c39a3c"><rect x="1.5" y="1.5" width="13" height="13" stroke-width="1.3" stroke-dasharray="2 1.2"/><path d="M5 11V8c0-2 1.5-3 3.5-3H11M9.5 3.5L11.5 5l-2 1.5" stroke-width="1.1"/></svg>批量测量</div>
<div class="pi" style="top:291.20px"><svg width="17" height="16" viewBox="0 0 17 16" fill="none" stroke="#c39a3c"><path d="M4 4l-2.5 5 2 4.5 5 .5" stroke-width="1.3"/><circle cx="4" cy="4" r="1.4" fill="#c39a3c"/><circle cx="2" cy="9" r="1.4" fill="#c39a3c"/><circle cx="8.5" cy="14" r="1.4" fill="#c39a3c"/><rect x="7" y="3" width="8" height="8" stroke-width="1.1"/><path d="M9 5.5h4M9 7.5h4" stroke-width="0.9"/></svg>查看分段长度</div>
<div class="pi" style="top:317.53px"><svg width="17" height="16" viewBox="0 0 17 16" fill="none" stroke="#c39a3c"><path d="M8 2L14.5 8.5 8 15 1.5 8.5z" stroke-width="1.3"/><path d="M8 5L11.5 8.5 8 12 4.5 8.5z" stroke-width="0.9"/><path d="M9 9l5-6" stroke-width="1.6"/></svg>修改单个标注属性</div>
<div class="pi" style="top:343.86px"><svg width="17" height="16" viewBox="0 0 17 16" fill="none" stroke="#c39a3c"><path d="M3 5c2-3 8-4 11-1s1 8-3 10-9 1-10-3 0-4 2-6z" stroke-width="1.3"/><path d="M4 12l7-8M6.5 13l6-7M2.5 9l4-4.5" stroke-width="1"/><circle cx="8" cy="2" r="1.2" fill="#c39a3c"/><circle cx="3" cy="14" r="1.2" fill="#c39a3c"/></svg>面积(含弧线)</div>
<div class="pi" style="top:370.19px"><svg width="17" height="16" viewBox="0 0 17 16" fill="none" stroke="#c39a3c"><path d="M3 5c2-3 8-4 11-1s1 8-3 10-9 1-10-3 0-4 2-6z" stroke-width="1.3"/><ellipse cx="8.5" cy="8.5" rx="3.5" ry="2.5" stroke-width="1"/><path d="M3 11l2-2M11 6l2-2M5 14l2-2M12 11l2-2" stroke-width="0.9"/></svg>测量填充面积</div>
<div class="pi" style="top:396.52px"><svg width="17" height="16" viewBox="0 0 17 16" fill="none" stroke="#c39a3c"><path d="M1.5 5h10v10h-10zM1.5 5l3-3.5h10l-3 3.5M14.5 1.5v10l-3 3.5" stroke-width="1.3"/><path d="M3 12l6-6M5 14l5-5" stroke-width="1"/></svg>计算侧面积</div>
<div class="pi" style="top:422.85px"><svg width="17" height="16" viewBox="0 0 17 16" fill="none" stroke="#c39a3c"><path d="M1.5 2L15 4l-1 10.5L4 14z" stroke-width="1.2"/><path d="M4.5 5l7.5 1.5-.5 5.5-5.5-.5z" stroke-width="1"/><path d="M6 10l4-4M7.5 11.5l3.5-3.5" stroke-width="0.8"/></svg>面积偏移</div>
<div class="pi" style="top:449.18px"><svg width="17" height="16" viewBox="0 0 17 16" fill="none" stroke="#c39a3c"><circle cx="8.5" cy="8.5" r="6" stroke-width="1.3"/><path d="M5 12l7-7M4 8.5l4.5-4.5M8.5 13l4.5-4.5" stroke-width="1.1"/><path d="M8.5 1l1.5 1.5-1.5 1.5-1.5-1.5zM2 8.5l1.5-1.5 1.5 1.5-1.5 1.5zM8.5 16l1.5-1.5-1.5-1.5-1.5 1.5zM15 8.5l-1.5-1.5-1.5 1.5 1.5 1.5z" fill="#c39a3c" stroke="none"/></svg>测量圆</div>
<div class="pi" style="top:475.51px"><svg width="17" height="16" viewBox="0 0 17 16" fill="none" stroke="#c39a3c"><circle cx="8.5" cy="8.5" r="6.5" stroke-width="1.3"/><path d="M8.5 8.5L4.5 4.5M4.5 4.5v3M4.5 4.5h3" stroke-width="1.2"/></svg>半径</div>
<div class="pi" style="top:501.84px"><svg width="17" height="16" viewBox="0 0 17 16" fill="none" stroke="#c39a3c"><path d="M2 13.5h13M2 13.5L11 4.5" stroke-width="1.3"/><path d="M7 9l3 4" stroke-width="1.1"/><circle cx="2.5" cy="13.5" r="1.6" fill="#c39a3c"/><path d="M10.5 5l2 2.5" stroke-width="1"/></svg>测量角度</div>
<div class="pi" style="top:528.17px"><svg width="17" height="16" viewBox="0 0 17 16" fill="none" stroke="#c39a3c"><path d="M5 15H1.5V1.5h13.5v10" stroke-width="1.3"/><path d="M4 9l3-3 2 2 3-3" stroke-width="1"/><path d="M5 13h10M5 11.5v3M15 11.5v3M8 12v2M11.5 12v2" stroke-width="0.9"/></svg>测量统计</div>
<div style="position:absolute;left:20px;top:239px;width:89px;height:26.5px;border:2px solid #e0393c"></div>
</div>
<div id="tip">点击左键选择直线的端点或弧线，空格键退回上一点，右键完成</div>
<div id="bbar">
 <svg style="position:absolute;left:0;top:0" width="356" height="31">
  <g fill="none" stroke="#e8e8e8" stroke-width="1.3">
   <circle cx="11.5" cy="11.5" r="3.3"/><circle cx="18.5" cy="11.5" r="3.3"/><circle cx="11.5" cy="18.5" r="3.3"/><circle cx="18.5" cy="18.5" r="3.3"/>
  </g>
  <rect x="30.5" y="5" width="1" height="21" fill="#4a4a4a"/>
  <rect x="87.5" y="2" width="149" height="27.5" rx="1.5" fill="#555" stroke="#444"/>
  <rect x="92" y="8.5" width="14" height="14" fill="#e2560f" stroke="#222" stroke-width="0.8"/>
  <text x="109" y="20" font-family="Liberation Serif" font-size="12" fill="#f0f0f0" textLength="42" lengthAdjust="spacingAndGlyphs">RJDN100</text>
  <path d="M227 13h7l-3.5 4.5z" fill="#eee"/>
  <rect x="241.5" y="5" width="1" height="21" fill="#4a4a4a"/>
  <g fill="none" stroke="#e8e8e8" stroke-width="1.3">
   <path d="M254.5 10h-5v11h11v-5"/><path d="M247 23.5h15"/><path d="M253.5 18l8-8 1.8 1.8-8 8h-1.8z"/>
   <path d="M283 8v15M275.5 15.5h15M280.5 10l2.5-2.5 2.5 2.5M280.5 21l2.5 2.5 2.5-2.5M278 13l-2.5 2.5 2.5 2.5M288 13l2.5 2.5-2.5 2.5"/>
   <rect x="307" y="9.5" width="9.5" height="12" rx="2"/><path d="M310 9.5v-1.5a2 2 0 0 1 2-2h6a2 2 0 0 1 2 2v9a2 2 0 0 1-2 2h-1.5"/>
   <rect x="334" y="9" width="10" height="13" rx="1.5"/><rect x="338" y="14" width="8.5" height="9" rx="1.5"/><path d="M336.5 9v-2h5v2"/>
  </g>
 </svg>
 <div style="position:absolute;left:34px;top:8px;font-size:12px;line-height:16px;color:#dcdcdc">标注分类</div>
</div>
<div id="btabs">
 <svg style="position:absolute;left:1070px;top:12px" width="30" height="8"><path d="M9 8L21 4.5Q24 4 24 8Z" fill="#f26a2a"/></svg>
 <svg style="position:absolute;left:0;top:0" width="260" height="20">
  <path d="M1 0.5H70L65 20H5z" fill="#000"/>
  <path d="M70 0.5H138.5L134.5 19.5H75z" fill="#fff" stroke="#000" stroke-width="1"/>
  <path d="M138.5 0.5H207.5L203.5 19.5H144.5z" fill="#fff" stroke="#000" stroke-width="1"/>
  
 </svg>
 <div style="position:absolute;left:24px;top:2px;font-size:13px;line-height:16px;color:#fff;font-family:'Liberation Sans'">模型</div>
 <div style="position:absolute;left:90px;top:2px;font-size:13px;line-height:16px;color:#111;font-family:'Liberation Sans'">布局1</div>
 <div style="position:absolute;left:159px;top:2px;font-size:13px;line-height:16px;color:#111;font-family:'Liberation Sans'">布局2</div>
</div>
<svg style="position:absolute;left:0;top:0" width="1268" height="696"><path d="M408.4 80.9L132.6 317.7" stroke="#e23b3d" stroke-width="2.2" stroke-linecap="round"/><path d="M119.7 328.8L127.7 312.0L137.5 323.4Z" fill="#e23b3d"/><path d="M126.1 346.3L179.7 401.5" stroke="#e23b3d" stroke-width="2.2" stroke-linecap="round"/><path d="M191.5 413.7L174.3 406.7L185.0 396.3Z" fill="#e23b3d"/><rect x="415" y="8" width="45.5" height="46" fill="none" stroke="#e23a3c" stroke-width="2"/></svg>
</body></html>
